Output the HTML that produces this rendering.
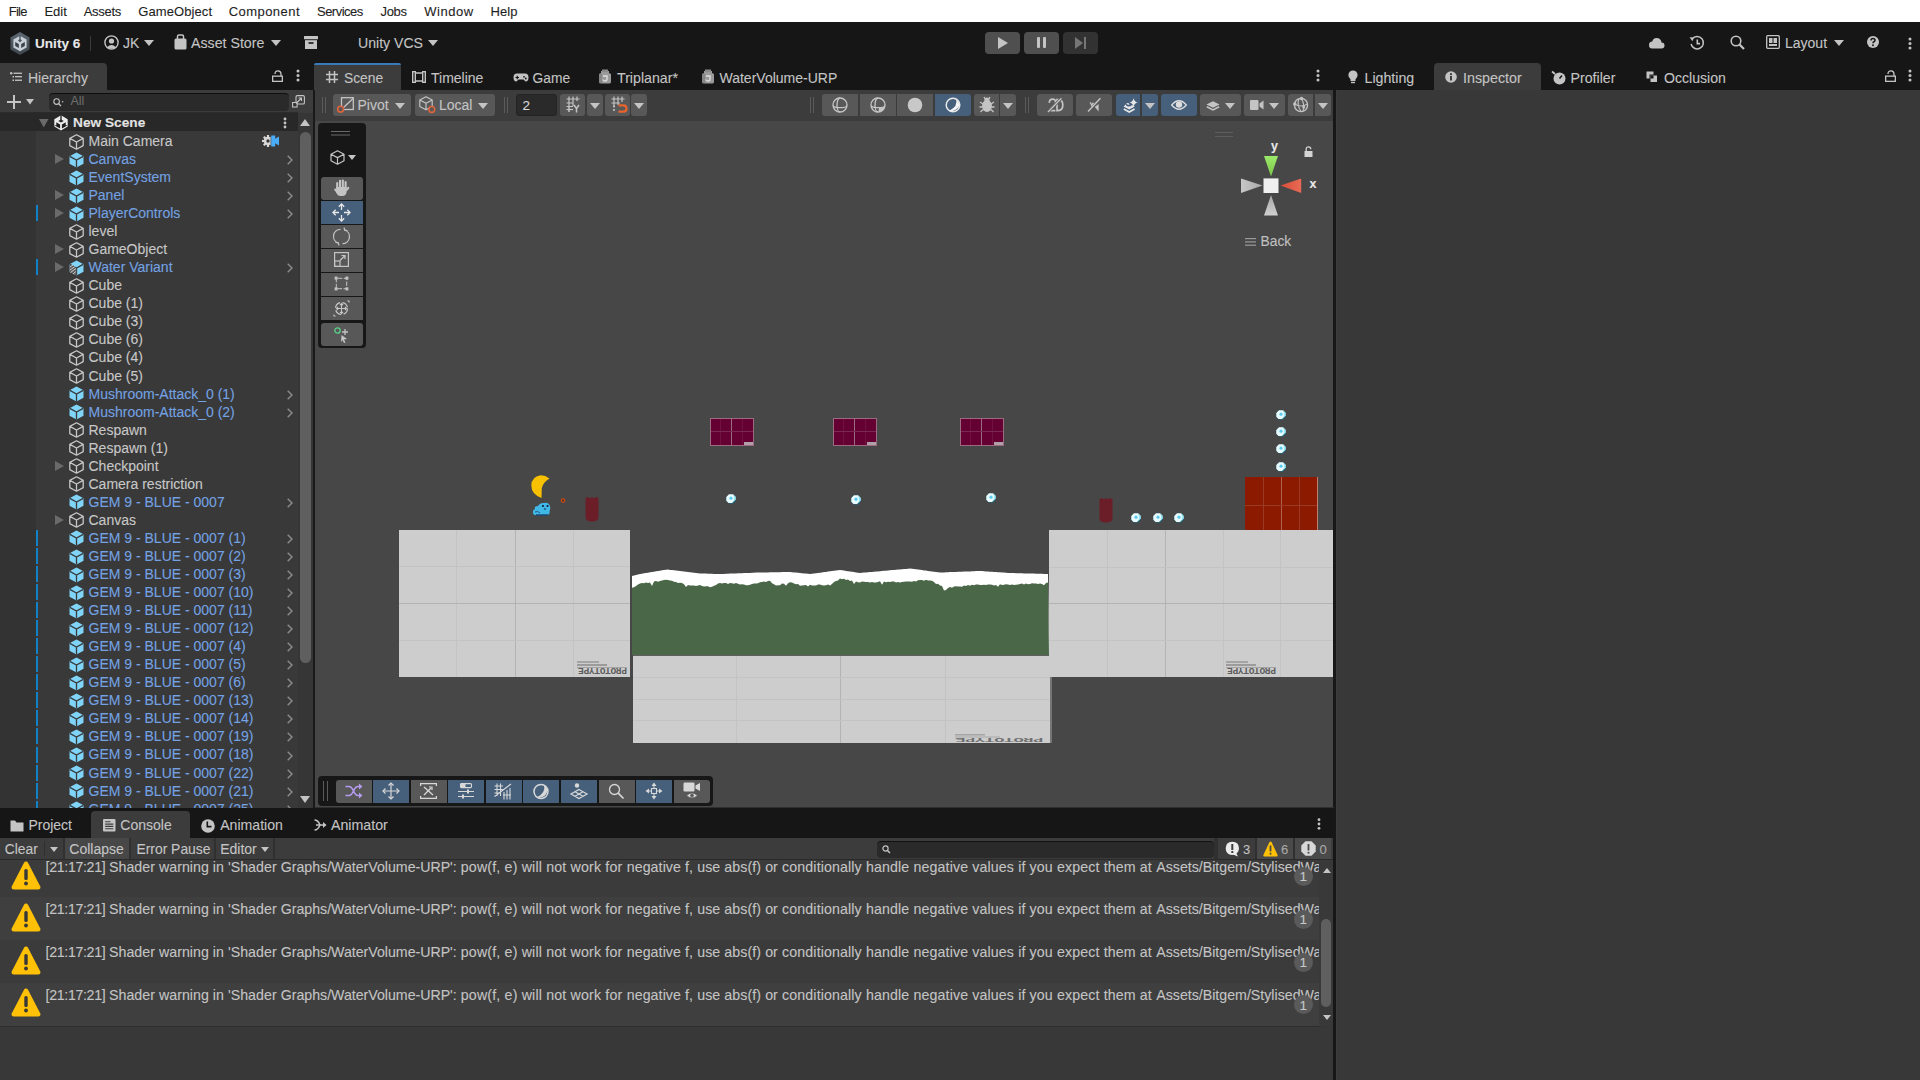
<!DOCTYPE html>
<html><head><meta charset="utf-8">
<style>
*{margin:0;padding:0;box-sizing:border-box}
html,body{width:1920px;height:1080px;overflow:hidden;background:#383838;font-family:"Liberation Sans",sans-serif;font-size:14px;color:#d2d2d2}
.a{position:absolute}
.t{position:absolute;white-space:nowrap;line-height:1;-webkit-text-stroke:0.1px currentColor}
svg{position:absolute;overflow:visible}
</style></head><body>
<div class="a" style="left:0px;top:0px;width:1920px;height:22px;background:#ffffff;"></div>
<span class="t" style="left:8.75px;top:5.30px;font-size:13px;color:#1e1e1e;letter-spacing:-0.731px">File</span>
<span class="t" style="left:44.5px;top:5.30px;font-size:13px;color:#1e1e1e;letter-spacing:-0.050px">Edit</span>
<span class="t" style="left:83.75px;top:5.30px;font-size:13px;color:#1e1e1e;letter-spacing:-0.303px">Assets</span>
<span class="t" style="left:138.25px;top:5.30px;font-size:13px;color:#1e1e1e;letter-spacing:0.087px">GameObject</span>
<span class="t" style="left:228.75px;top:5.30px;font-size:13px;color:#1e1e1e;letter-spacing:0.443px">Component</span>
<span class="t" style="left:317.0px;top:5.30px;font-size:13px;color:#1e1e1e;letter-spacing:-0.515px">Services</span>
<span class="t" style="left:380.5px;top:5.30px;font-size:13px;color:#1e1e1e;letter-spacing:-0.319px">Jobs</span>
<span class="t" style="left:424.25px;top:5.30px;font-size:13px;color:#1e1e1e;letter-spacing:0.547px">Window</span>
<span class="t" style="left:490.5px;top:5.30px;font-size:13px;color:#1e1e1e;letter-spacing:0.086px">Help</span>
<div class="a" style="left:0px;top:22px;width:1920px;height:68px;background:#161616;"></div>
<svg style="left:10px;top:32px" width="20" height="24" viewBox="0 0 20 24">
 <defs><linearGradient id="ulg" x1="0" y1="0" x2="0" y2="1"><stop offset="0" stop-color="#5d6873"/><stop offset="1" stop-color="#3e464e"/></linearGradient></defs>
 <path d="M10 0 L19.5 5.5 L19.5 17.5 L10 23 L0.5 17.5 L0.5 5.5 Z" fill="url(#ulg)"/>
 <path d="M10 3.8 L16.6 7.6 L16.6 15.4 L10 19.2 L3.4 15.4 L3.4 7.6 Z" fill="#c9cfd6"/>
 <path d="M9.2 3.8 H10.8 L10.6 7.2 L12 8.6 L10 10.2 L8 8.6 L9.4 7.2Z" fill="#4a545d"/>
 <path d="M5.2 10 L8.8 12 L8.8 16 L5.2 14Z" fill="#3a424a"/>
 <path d="M14.8 10 L11.2 12 L11.2 16 L14.8 14Z" fill="#3a424a"/>
</svg>
<span class="t" style="left:35px;top:37.09px;font-size:13.6px;color:#e8e8e8;font-weight:bold;">Unity 6</span>
<div class="a" style="left:90px;top:36px;width:1px;height:15px;background:#3a3a3a;"></div>
<svg style="left:104px;top:35px" width="15" height="15" viewBox="0 0 15 15"><circle cx="7.5" cy="7.5" r="6.6" fill="none" stroke="#c4c4c4" stroke-width="1.4"/><circle cx="7.5" cy="6" r="2.6" fill="#c4c4c4"/><path d="M3 12.2 Q7.5 7.8 12 12.2 Q7.5 15.5 3 12.2Z" fill="#c4c4c4"/></svg>
<span class="t" style="left:123px;top:36.05px;font-size:14px;color:#c4c4c4;">JK</span>
<svg style="left:144px;top:40px" width="10" height="6" viewBox="0 0 10 6"><path d="M0 0H10L5.0 6Z" fill="#c4c4c4"/></svg>
<svg style="left:174px;top:34px" width="13" height="16" viewBox="0 0 13 16"><path d="M3.5 5 V2.5 Q3.5 1 5 1 H8 Q9.5 1 9.5 2.5 V5" stroke="#c4c4c4" stroke-width="1.5" fill="none"/><rect x="0.5" y="4.5" width="12" height="11" rx="1.5" fill="#c4c4c4"/></svg>
<span class="t" style="left:191px;top:35.88px;font-size:14.2px;color:#c4c4c4;">Asset Store</span>
<svg style="left:271px;top:40px" width="10" height="6" viewBox="0 0 10 6"><path d="M0 0H10L5.0 6Z" fill="#c4c4c4"/></svg>
<svg style="left:304px;top:36px" width="14" height="13" viewBox="0 0 14 13"><rect x="0" y="0" width="14" height="3.2" rx="0.5" fill="#c4c4c4"/><rect x="1" y="4.2" width="12" height="8.8" fill="#c4c4c4"/><rect x="4.5" y="6.2" width="5" height="1.6" fill="#161616"/></svg>
<span class="t" style="left:358px;top:35.96px;font-size:14.1px;color:#c4c4c4;">Unity VCS</span>
<svg style="left:428px;top:40px" width="10" height="6" viewBox="0 0 10 6"><path d="M0 0H10L5.0 6Z" fill="#c4c4c4"/></svg>
<div class="a" style="left:985px;top:32px;width:35px;height:22px;background:#4f4f4f;border-radius:4px"></div>
<svg style="left:998px;top:37px" width="10" height="12" viewBox="0 0 10 12"><path d="M0 0L10 6L0 12Z" fill="#c4c4c4"/></svg>
<div class="a" style="left:1024px;top:32px;width:35px;height:22px;background:#4f4f4f;border-radius:4px"></div>
<div class="a" style="left:1037px;top:37px;width:3px;height:11px;background:#c4c4c4;border-radius:1px"></div>
<div class="a" style="left:1043px;top:37px;width:3px;height:11px;background:#c4c4c4;border-radius:1px"></div>
<div class="a" style="left:1063px;top:32px;width:35px;height:22px;background:#323232;border-radius:4px"></div>
<svg style="left:1075px;top:37px" width="12" height="12" viewBox="0 0 12 12"><path d="M0 0L8 6L0 12Z" fill="#767676"/><rect x="9" y="0" width="2" height="12" fill="#767676"/></svg>
<svg style="left:1648px;top:37px" width="17" height="12" viewBox="0 0 17 12"><path d="M4 11.5 H13.5 Q16.5 11.5 16.5 8.5 Q16.5 5.5 13.5 5.5 Q13 1 8.5 1 Q5 1 4.3 4.5 Q1 4.8 1 8 Q1 11.5 4 11.5Z" fill="#c4c4c4"/></svg>
<svg style="left:1689px;top:35px" width="16" height="16" viewBox="0 0 16 16"><path d="M3.2 4 A6.2 6.2 0 1 1 2.1 9" stroke="#c4c4c4" stroke-width="1.5" fill="none"/><path d="M0.6 2.2 L4.8 2.4 L3.4 6.3Z" fill="#c4c4c4"/><path d="M8.3 4.6 V8.6 H11" stroke="#c4c4c4" stroke-width="1.6" fill="none"/></svg>
<svg style="left:1730px;top:35px" width="15" height="16" viewBox="0 0 15 16"><circle cx="6" cy="6" r="4.8" stroke="#c4c4c4" stroke-width="1.6" fill="none"/><path d="M9.5 9.5 L14 14" stroke="#c4c4c4" stroke-width="2.2"/></svg>
<svg style="left:1766px;top:35px" width="14" height="14" viewBox="0 0 14 14"><rect x="0.7" y="0.7" width="12.6" height="12.6" rx="1" stroke="#c4c4c4" stroke-width="1.3" fill="none"/><rect x="3" y="3" width="3.5" height="5" fill="#c4c4c4"/><rect x="7.5" y="3" width="3.5" height="5" fill="#c4c4c4"/><rect x="3" y="9" width="8" height="2" fill="#c4c4c4"/></svg>
<span class="t" style="left:1785px;top:36.05px;font-size:14px;color:#c4c4c4;">Layout</span>
<svg style="left:1834px;top:40px" width="10" height="6" viewBox="0 0 10 6"><path d="M0 0H10L5.0 6Z" fill="#c4c4c4"/></svg>
<svg style="left:1867px;top:36px" width="12" height="12" viewBox="0 0 12 12"><circle cx="6" cy="6" r="6" fill="#c4c4c4"/><path d="M4 4.6 Q4 2.5 6 2.5 Q8 2.5 8 4.3 Q8 5.5 6.6 6 Q6 6.3 6 7.3" stroke="#161616" stroke-width="1.5" fill="none"/><circle cx="6" cy="9.3" r="0.95" fill="#161616"/></svg>
<svg style="left:1908px;top:37px" width="4" height="13" viewBox="0 0 4 13"><circle cx="2" cy="2" r="1.5" fill="#c4c4c4"/><circle cx="2" cy="6.5" r="1.5" fill="#c4c4c4"/><circle cx="2" cy="11" r="1.5" fill="#c4c4c4"/></svg>
<div class="a" style="left:0px;top:63px;width:107px;height:27px;background:#3c3c3c;border-radius:0 4px 0 0"></div>
<svg style="left:10px;top:72px" width="12" height="10" viewBox="0 0 12 10"><circle cx="1.2" cy="1.2" r="1.2" fill="#c4c4c4"/><rect x="3.5" y="0.6" width="8.5" height="1.3" fill="#c4c4c4"/><rect x="2.5" y="4" width="1.5" height="1.5" fill="#c4c4c4"/><rect x="5" y="4" width="7" height="1.3" fill="#c4c4c4"/><rect x="2.5" y="7.5" width="1.5" height="1.5" fill="#c4c4c4"/><rect x="5" y="7.6" width="7" height="1.3" fill="#c4c4c4"/></svg>
<span class="t" style="left:28px;top:71.35px;font-size:14px;color:#c4c4c4;">Hierarchy</span>
<svg style="left:272px;top:69.5px" width="11" height="12" viewBox="0 0 11 12"><path d="M3 4 Q3 0.8 6 0.8 Q9 0.8 9 4 V6" stroke="#c4c4c4" stroke-width="1.3" fill="none"/><rect x="0.65" y="6.15" width="9.7" height="5.2" stroke="#c4c4c4" stroke-width="1.3" fill="none"/></svg>
<svg style="left:296px;top:69px" width="4" height="13" viewBox="0 0 4 13"><circle cx="2" cy="2" r="1.5" fill="#c4c4c4"/><circle cx="2" cy="6.5" r="1.5" fill="#c4c4c4"/><circle cx="2" cy="11" r="1.5" fill="#c4c4c4"/></svg>
<div class="a" style="left:314px;top:63px;width:87px;height:27px;background:#3c3c3c;border-radius:4px 4px 0 0"></div>
<div class="a" style="left:314px;top:63px;width:87px;height:2px;background:#3a79bb;border-radius:4px 4px 0 0"></div>
<svg style="left:326px;top:71px" width="12" height="12" viewBox="0 0 12 12"><path d="M3.5 0V12M8.5 0V12M0 3.5H12M0 8.5H12" stroke="#c4c4c4" stroke-width="1.5"/></svg>
<span class="t" style="left:344px;top:71.52px;font-size:13.8px;color:#c4c4c4;">Scene</span>
<svg style="left:412px;top:71px" width="14" height="12" viewBox="0 0 14 12"><rect x="0.7" y="0.7" width="2.6" height="10.6" fill="none" stroke="#c4c4c4" stroke-width="1.4"/><rect x="10.7" y="0.7" width="2.6" height="10.6" fill="none" stroke="#c4c4c4" stroke-width="1.4"/><path d="M3 2H11M3 10H11" stroke="#c4c4c4" stroke-width="1.4"/></svg>
<span class="t" style="left:431px;top:71.35px;font-size:14px;color:#c4c4c4;">Timeline</span>
<svg style="left:513px;top:73px" width="16" height="9" viewBox="0 0 16 9"><path d="M4 0.5 H12 Q15.5 0.5 15.5 4.5 Q15.5 8.5 12.5 8.5 L10.5 6.5 H5.5 L3.5 8.5 Q0.5 8.5 0.5 4.5 Q0.5 0.5 4 0.5Z" fill="#c4c4c4"/><path d="M2.5 4.5H6M4.25 2.8V6.2" stroke="#161616" stroke-width="1.2"/><circle cx="11" cy="3.8" r="0.9" fill="#161616"/><circle cx="12.8" cy="5.5" r="0.9" fill="#161616"/></svg>
<span class="t" style="left:532.5px;top:71.52px;font-size:13.8px;color:#c4c4c4;">Game</span>
<svg style="left:598px;top:69px" width="14" height="15" viewBox="0 0 14 15"><path d="M3 2 H11 V4 L13 5 V13 Q13 14.5 11 14.5 H3 Q1 14.5 1 13 V5 L3 4Z" fill="#9a9a9a"/><rect x="4" y="0.5" width="6" height="2.5" fill="#8a8a8a"/><path d="M5 7 H9 V10 Q9 12 7 12 Q5 12 5 10.5" stroke="#e0e0e0" stroke-width="1.3" fill="none"/><rect x="1" y="5" width="3" height="9" fill="#7a7a7a" opacity=".6"/></svg>
<span class="t" style="left:617px;top:71.18px;font-size:14.2px;color:#c4c4c4;">Triplanar*</span>
<svg style="left:701px;top:69px" width="14" height="15" viewBox="0 0 14 15"><path d="M3 2 H11 V4 L13 5 V13 Q13 14.5 11 14.5 H3 Q1 14.5 1 13 V5 L3 4Z" fill="#9a9a9a"/><rect x="4" y="0.5" width="6" height="2.5" fill="#8a8a8a"/><path d="M5 7 H9 V10 Q9 12 7 12 Q5 12 5 10.5" stroke="#e0e0e0" stroke-width="1.3" fill="none"/><rect x="1" y="5" width="3" height="9" fill="#7a7a7a" opacity=".6"/></svg>
<span class="t" style="left:719.5px;top:71.35px;font-size:14px;color:#c4c4c4;">WaterVolume-URP</span>
<svg style="left:1316px;top:69px" width="4" height="13" viewBox="0 0 4 13"><circle cx="2" cy="2" r="1.5" fill="#c4c4c4"/><circle cx="2" cy="6.5" r="1.5" fill="#c4c4c4"/><circle cx="2" cy="11" r="1.5" fill="#c4c4c4"/></svg>
<svg style="left:1348px;top:70px" width="10" height="14" viewBox="0 0 10 14"><circle cx="5" cy="5" r="4.6" fill="#c4c4c4"/><path d="M2.5 8 H7.5 V11 H2.5Z" fill="#c4c4c4"/><path d="M3 12.5H7" stroke="#c4c4c4" stroke-width="1.4"/></svg>
<span class="t" style="left:1364.5px;top:71.18px;font-size:14.2px;color:#c4c4c4;">Lighting</span>
<div class="a" style="left:1434px;top:63px;width:107px;height:27px;background:#3c3c3c;border-radius:4px 4px 0 0"></div>
<svg style="left:1445px;top:71px" width="12" height="12" viewBox="0 0 12 12"><circle cx="6" cy="6" r="5.8" fill="#c4c4c4"/><rect x="5" y="5" width="2" height="4.5" fill="#3c3c3c"/><circle cx="6" cy="3.2" r="1.1" fill="#3c3c3c"/></svg>
<span class="t" style="left:1463px;top:71.10px;font-size:14.3px;color:#c4c4c4;">Inspector</span>
<svg style="left:1551px;top:70px" width="15" height="15" viewBox="0 0 15 15"><circle cx="8.5" cy="8.5" r="6" fill="#c4c4c4"/><path d="M8.5 8.5 L11 5.5" stroke="#161616" stroke-width="1.5"/><path d="M1 1.5 L4 4" stroke="#c4c4c4" stroke-width="1.8"/></svg>
<span class="t" style="left:1570.5px;top:71.18px;font-size:14.2px;color:#c4c4c4;">Profiler</span>
<svg style="left:1646px;top:71px" width="12" height="12" viewBox="0 0 12 12"><rect x="0.5" y="0.5" width="7" height="7" fill="#c4c4c4"/><rect x="4" y="4" width="7.5" height="7.5" fill="#c4c4c4" stroke="#161616" stroke-width="1"/><rect x="4.5" y="4.5" width="3" height="3" fill="#161616"/></svg>
<span class="t" style="left:1664px;top:71.26px;font-size:14.1px;color:#c4c4c4;">Occlusion</span>
<svg style="left:1885px;top:70px" width="11" height="12" viewBox="0 0 11 12"><path d="M3 4 Q3 0.8 6 0.8 Q9 0.8 9 4 V6" stroke="#c4c4c4" stroke-width="1.3" fill="none"/><rect x="0.65" y="6.15" width="9.7" height="5.2" stroke="#c4c4c4" stroke-width="1.3" fill="none"/></svg>
<svg style="left:1908px;top:69px" width="4" height="13" viewBox="0 0 4 13"><circle cx="2" cy="2" r="1.5" fill="#c4c4c4"/><circle cx="2" cy="6.5" r="1.5" fill="#c4c4c4"/><circle cx="2" cy="11" r="1.5" fill="#c4c4c4"/></svg>
<div class="a" style="left:0px;top:90px;width:313px;height:23px;background:#3c3c3c;"></div>
<div class="a" style="left:0px;top:113px;width:298px;height:695px;background:#393939;"></div>
<div class="a" style="left:0px;top:131px;width:36px;height:677px;background:#333333;"></div>
<div class="a" style="left:298px;top:113px;width:15px;height:695px;background:#363636;"></div>
<svg style="left:7px;top:95px" width="14" height="14" viewBox="0 0 14 14"><path d="M7 0V14M0 7H14" stroke="#c4c4c4" stroke-width="2"/></svg>
<svg style="left:26px;top:98.5px" width="8" height="5.5" viewBox="0 0 8 5.5"><path d="M0 0H8L4.0 5.5Z" fill="#c4c4c4"/></svg>
<div class="a" style="left:49px;top:92.5px;width:240px;height:18px;background:#2a2a2a;border-radius:4px;border-top:1px solid #0e0e0e"></div>
<svg style="left:53px;top:98px" width="11" height="9" viewBox="0 0 11 9"><circle cx="3.6" cy="3.6" r="2.8" stroke="#c4c4c4" stroke-width="1.1" fill="none"/><path d="M5.6 5.6 L8 8" stroke="#c4c4c4" stroke-width="1.3"/><circle cx="9.6" cy="3.7" r="0.8" fill="#c4c4c4"/></svg>
<span class="t" style="left:70.5px;top:95.42px;font-size:12.5px;color:#6c6c6c;">All</span>
<div class="a" style="left:289px;top:92.5px;width:19px;height:18px;background:#3c3c3c;border-radius:0 4px 4px 0"></div>
<svg style="left:292px;top:95px" width="13" height="13" viewBox="0 0 13 13"><rect x="4" y="0.6" width="8.4" height="8.4" rx="1.3" stroke="#c4c4c4" stroke-width="1.1" fill="none"/><rect x="0.6" y="7.5" width="4.5" height="4.5" stroke="#c4c4c4" stroke-width="1.1" fill="#333"/><path d="M4 8.5 L9.5 3 M6.5 3H9.5V6" stroke="#c4c4c4" stroke-width="1.1" fill="none"/></svg>
<div class="a" style="left:0px;top:112px;width:298px;height:1px;background:#2b2b2b;"></div>
<div class="a" style="left:0px;top:113px;width:298px;height:18px;background:#282828;"></div>
<svg style="left:38.5px;top:119.3px" width="9.5" height="8.5" viewBox="0 0 9.5 8.5"><path d="M0 0H9.5L4.75 8.5Z" fill="#6a6a6a"/></svg>
<svg style="left:54px;top:115.3px" width="14" height="15.7" viewBox="0 0 14 15.7"><path d="M7 0.3 L13.7 4.2 L13.7 11.6 L7 15.5 L0.3 11.6 L0.3 4.2Z" fill="#ececec"/><rect x="6.3" y="0" width="1.4" height="5" fill="#282828"/><path d="M7 4.4 L9.8 6 L7 7.6 L4.2 6Z" fill="#282828"/><path d="M2.3 7.3 L6.1 9.4 L6.1 13.4 L0.2 10.3 L2.3 10.3Z" fill="#1e1e1e"/><path d="M11.7 7.3 L7.9 9.4 L7.9 13.4 L13.8 10.3 L11.7 10.3Z" fill="#1e1e1e"/></svg>
<span class="t" style="left:73px;top:116.10px;font-size:13.7px;color:#e2e2e2;font-weight:bold;">New Scene</span>
<svg style="left:283px;top:117px" width="4" height="12" viewBox="0 0 4 12"><circle cx="2" cy="2" r="1.4" fill="#c4c4c4"/><circle cx="2" cy="6" r="1.4" fill="#c4c4c4"/><circle cx="2" cy="10" r="1.4" fill="#c4c4c4"/></svg>
<svg style="left:300px;top:119px" width="10" height="7" viewBox="0 0 10 7"><path d="M0 7H10L5 0Z" fill="#c4c4c4"/></svg>
<div class="a" style="left:300px;top:132px;width:11px;height:531px;background:#5f5f5f;border-radius:5.5px"></div>
<svg style="left:300px;top:796px" width="10" height="7" viewBox="0 0 10 7"><path d="M0 0H10L5 7Z" fill="#c4c4c4"/></svg>
<div class="a" style="left:0;top:131px;width:298px;height:677px;overflow:hidden">
<svg style="left:69px;top:2.5px" width="15" height="16" viewBox="0 0 15 16"><path d="M7.5 0.8 L14.2 4.4 L14.2 11.6 L7.5 15.2 L0.8 11.6 L0.8 4.4Z M0.8 4.4 L7.5 8 L14.2 4.4 M7.5 8 V15.2" stroke="#c8c8c8" stroke-width="1.3" fill="none" stroke-linejoin="round"/></svg>
<span class="t" style="left:88.5px;top:2.95px;font-size:14px;color:#c8c8c8;">Main Camera</span>
<svg style="left:55px;top:23.05px" width="9" height="10" viewBox="0 0 9 10"><path d="M0 0L9 5L0 10Z" fill="#6a6a6a"/></svg>
<svg style="left:69px;top:20.55px" width="15" height="16" viewBox="0 0 15 16"><path d="M7.5 0.5 L14.5 4.2 L14.5 11.8 L7.5 15.5 L0.5 11.8 L0.5 4.2Z" fill="#80d4f8"/><path d="M0.8 4.4 L7.5 8 L14.2 4.4 M7.5 8 V15.5" stroke="#393939" stroke-width="1.3" fill="none"/></svg>
<span class="t" style="left:88.5px;top:21.00px;font-size:14px;color:#74a2e2;">Canvas</span>
<svg style="left:287px;top:24.05px" width="6" height="10" viewBox="0 0 6 10"><path d="M0.7 0.7 L5 5 L0.7 9.3" stroke="#8c8c8c" stroke-width="1.4" fill="none"/></svg>
<svg style="left:69px;top:38.59px" width="15" height="16" viewBox="0 0 15 16"><path d="M7.5 0.5 L14.5 4.2 L14.5 11.8 L7.5 15.5 L0.5 11.8 L0.5 4.2Z" fill="#80d4f8"/><path d="M0.8 4.4 L7.5 8 L14.2 4.4 M7.5 8 V15.5" stroke="#393939" stroke-width="1.3" fill="none"/></svg>
<span class="t" style="left:88.5px;top:39.04px;font-size:14px;color:#74a2e2;">EventSystem</span>
<svg style="left:287px;top:42.09px" width="6" height="10" viewBox="0 0 6 10"><path d="M0.7 0.7 L5 5 L0.7 9.3" stroke="#8c8c8c" stroke-width="1.4" fill="none"/></svg>
<svg style="left:55px;top:59.14px" width="9" height="10" viewBox="0 0 9 10"><path d="M0 0L9 5L0 10Z" fill="#6a6a6a"/></svg>
<svg style="left:69px;top:56.64px" width="15" height="16" viewBox="0 0 15 16"><path d="M7.5 0.5 L14.5 4.2 L14.5 11.8 L7.5 15.5 L0.5 11.8 L0.5 4.2Z" fill="#80d4f8"/><path d="M0.8 4.4 L7.5 8 L14.2 4.4 M7.5 8 V15.5" stroke="#393939" stroke-width="1.3" fill="none"/></svg>
<span class="t" style="left:88.5px;top:57.09px;font-size:14px;color:#74a2e2;">Panel</span>
<svg style="left:287px;top:60.14px" width="6" height="10" viewBox="0 0 6 10"><path d="M0.7 0.7 L5 5 L0.7 9.3" stroke="#8c8c8c" stroke-width="1.4" fill="none"/></svg>
<div class="a" style="left:36px;top:74.18px;width:2px;height:16px;background:#1181c8;"></div>
<svg style="left:55px;top:77.18px" width="9" height="10" viewBox="0 0 9 10"><path d="M0 0L9 5L0 10Z" fill="#6a6a6a"/></svg>
<svg style="left:69px;top:74.68px" width="15" height="16" viewBox="0 0 15 16"><path d="M7.5 0.5 L14.5 4.2 L14.5 11.8 L7.5 15.5 L0.5 11.8 L0.5 4.2Z" fill="#80d4f8"/><path d="M0.8 4.4 L7.5 8 L14.2 4.4 M7.5 8 V15.5" stroke="#393939" stroke-width="1.3" fill="none"/></svg>
<span class="t" style="left:88.5px;top:75.13px;font-size:14px;color:#74a2e2;">PlayerControls</span>
<svg style="left:287px;top:78.18px" width="6" height="10" viewBox="0 0 6 10"><path d="M0.7 0.7 L5 5 L0.7 9.3" stroke="#8c8c8c" stroke-width="1.4" fill="none"/></svg>
<svg style="left:69px;top:92.73px" width="15" height="16" viewBox="0 0 15 16"><path d="M7.5 0.8 L14.2 4.4 L14.2 11.6 L7.5 15.2 L0.8 11.6 L0.8 4.4Z M0.8 4.4 L7.5 8 L14.2 4.4 M7.5 8 V15.2" stroke="#c8c8c8" stroke-width="1.3" fill="none" stroke-linejoin="round"/></svg>
<span class="t" style="left:88.5px;top:93.18px;font-size:14px;color:#c8c8c8;">level</span>
<svg style="left:55px;top:113.27px" width="9" height="10" viewBox="0 0 9 10"><path d="M0 0L9 5L0 10Z" fill="#6a6a6a"/></svg>
<svg style="left:69px;top:110.77px" width="15" height="16" viewBox="0 0 15 16"><path d="M7.5 0.8 L14.2 4.4 L14.2 11.6 L7.5 15.2 L0.8 11.6 L0.8 4.4Z M0.8 4.4 L7.5 8 L14.2 4.4 M7.5 8 V15.2" stroke="#c8c8c8" stroke-width="1.3" fill="none" stroke-linejoin="round"/></svg>
<span class="t" style="left:88.5px;top:111.22px;font-size:14px;color:#c8c8c8;">GameObject</span>
<div class="a" style="left:36px;top:128.32px;width:2px;height:16px;background:#1181c8;"></div>
<svg style="left:55px;top:131.32px" width="9" height="10" viewBox="0 0 9 10"><path d="M0 0L9 5L0 10Z" fill="#6a6a6a"/></svg>
<svg style="left:69px;top:128.82px" width="15" height="16" viewBox="0 0 15 16"><path d="M7.5 0.5 L14.5 4.2 L14.5 11.8 L7.5 15.5 L0.5 11.8 L0.5 4.2Z" fill="#80d4f8"/><path d="M0.8 4.4 L7.5 8 L14.2 4.4 M7.5 8 V15.5" stroke="#393939" stroke-width="1.3" fill="none"/><path d="M0.5 4.2 L7.5 8 V15.5 L0.5 11.8Z" fill="#5a5a5a"/><path d="M1 7 L4 5 M1 10 L6 6.5 M1.5 12.5 L7 8.5 M4 14 L7 11.5" stroke="#d0d0d0" stroke-width="1"/></svg>
<span class="t" style="left:88.5px;top:129.27px;font-size:14px;color:#74a2e2;">Water Variant</span>
<svg style="left:287px;top:132.32px" width="6" height="10" viewBox="0 0 6 10"><path d="M0.7 0.7 L5 5 L0.7 9.3" stroke="#8c8c8c" stroke-width="1.4" fill="none"/></svg>
<svg style="left:69px;top:146.86px" width="15" height="16" viewBox="0 0 15 16"><path d="M7.5 0.8 L14.2 4.4 L14.2 11.6 L7.5 15.2 L0.8 11.6 L0.8 4.4Z M0.8 4.4 L7.5 8 L14.2 4.4 M7.5 8 V15.2" stroke="#c8c8c8" stroke-width="1.3" fill="none" stroke-linejoin="round"/></svg>
<span class="t" style="left:88.5px;top:147.31px;font-size:14px;color:#c8c8c8;">Cube</span>
<svg style="left:69px;top:164.91px" width="15" height="16" viewBox="0 0 15 16"><path d="M7.5 0.8 L14.2 4.4 L14.2 11.6 L7.5 15.2 L0.8 11.6 L0.8 4.4Z M0.8 4.4 L7.5 8 L14.2 4.4 M7.5 8 V15.2" stroke="#c8c8c8" stroke-width="1.3" fill="none" stroke-linejoin="round"/></svg>
<span class="t" style="left:88.5px;top:165.36px;font-size:14px;color:#c8c8c8;">Cube (1)</span>
<svg style="left:69px;top:182.95px" width="15" height="16" viewBox="0 0 15 16"><path d="M7.5 0.8 L14.2 4.4 L14.2 11.6 L7.5 15.2 L0.8 11.6 L0.8 4.4Z M0.8 4.4 L7.5 8 L14.2 4.4 M7.5 8 V15.2" stroke="#c8c8c8" stroke-width="1.3" fill="none" stroke-linejoin="round"/></svg>
<span class="t" style="left:88.5px;top:183.40px;font-size:14px;color:#c8c8c8;">Cube (3)</span>
<svg style="left:69px;top:201.0px" width="15" height="16" viewBox="0 0 15 16"><path d="M7.5 0.8 L14.2 4.4 L14.2 11.6 L7.5 15.2 L0.8 11.6 L0.8 4.4Z M0.8 4.4 L7.5 8 L14.2 4.4 M7.5 8 V15.2" stroke="#c8c8c8" stroke-width="1.3" fill="none" stroke-linejoin="round"/></svg>
<span class="t" style="left:88.5px;top:201.45px;font-size:14px;color:#c8c8c8;">Cube (6)</span>
<svg style="left:69px;top:219.04px" width="15" height="16" viewBox="0 0 15 16"><path d="M7.5 0.8 L14.2 4.4 L14.2 11.6 L7.5 15.2 L0.8 11.6 L0.8 4.4Z M0.8 4.4 L7.5 8 L14.2 4.4 M7.5 8 V15.2" stroke="#c8c8c8" stroke-width="1.3" fill="none" stroke-linejoin="round"/></svg>
<span class="t" style="left:88.5px;top:219.49px;font-size:14px;color:#c8c8c8;">Cube (4)</span>
<svg style="left:69px;top:237.09px" width="15" height="16" viewBox="0 0 15 16"><path d="M7.5 0.8 L14.2 4.4 L14.2 11.6 L7.5 15.2 L0.8 11.6 L0.8 4.4Z M0.8 4.4 L7.5 8 L14.2 4.4 M7.5 8 V15.2" stroke="#c8c8c8" stroke-width="1.3" fill="none" stroke-linejoin="round"/></svg>
<span class="t" style="left:88.5px;top:237.54px;font-size:14px;color:#c8c8c8;">Cube (5)</span>
<svg style="left:69px;top:255.13px" width="15" height="16" viewBox="0 0 15 16"><path d="M7.5 0.5 L14.5 4.2 L14.5 11.8 L7.5 15.5 L0.5 11.8 L0.5 4.2Z" fill="#80d4f8"/><path d="M0.8 4.4 L7.5 8 L14.2 4.4 M7.5 8 V15.5" stroke="#393939" stroke-width="1.3" fill="none"/></svg>
<span class="t" style="left:88.5px;top:255.58px;font-size:14px;color:#74a2e2;">Mushroom-Attack_0 (1)</span>
<svg style="left:287px;top:258.63px" width="6" height="10" viewBox="0 0 6 10"><path d="M0.7 0.7 L5 5 L0.7 9.3" stroke="#8c8c8c" stroke-width="1.4" fill="none"/></svg>
<svg style="left:69px;top:273.18px" width="15" height="16" viewBox="0 0 15 16"><path d="M7.5 0.5 L14.5 4.2 L14.5 11.8 L7.5 15.5 L0.5 11.8 L0.5 4.2Z" fill="#80d4f8"/><path d="M0.8 4.4 L7.5 8 L14.2 4.4 M7.5 8 V15.5" stroke="#393939" stroke-width="1.3" fill="none"/></svg>
<span class="t" style="left:88.5px;top:273.63px;font-size:14px;color:#74a2e2;">Mushroom-Attack_0 (2)</span>
<svg style="left:287px;top:276.68px" width="6" height="10" viewBox="0 0 6 10"><path d="M0.7 0.7 L5 5 L0.7 9.3" stroke="#8c8c8c" stroke-width="1.4" fill="none"/></svg>
<svg style="left:69px;top:291.22px" width="15" height="16" viewBox="0 0 15 16"><path d="M7.5 0.8 L14.2 4.4 L14.2 11.6 L7.5 15.2 L0.8 11.6 L0.8 4.4Z M0.8 4.4 L7.5 8 L14.2 4.4 M7.5 8 V15.2" stroke="#c8c8c8" stroke-width="1.3" fill="none" stroke-linejoin="round"/></svg>
<span class="t" style="left:88.5px;top:291.67px;font-size:14px;color:#c8c8c8;">Respawn</span>
<svg style="left:69px;top:309.27px" width="15" height="16" viewBox="0 0 15 16"><path d="M7.5 0.8 L14.2 4.4 L14.2 11.6 L7.5 15.2 L0.8 11.6 L0.8 4.4Z M0.8 4.4 L7.5 8 L14.2 4.4 M7.5 8 V15.2" stroke="#c8c8c8" stroke-width="1.3" fill="none" stroke-linejoin="round"/></svg>
<span class="t" style="left:88.5px;top:309.72px;font-size:14px;color:#c8c8c8;">Respawn (1)</span>
<svg style="left:55px;top:329.81px" width="9" height="10" viewBox="0 0 9 10"><path d="M0 0L9 5L0 10Z" fill="#6a6a6a"/></svg>
<svg style="left:69px;top:327.31px" width="15" height="16" viewBox="0 0 15 16"><path d="M7.5 0.8 L14.2 4.4 L14.2 11.6 L7.5 15.2 L0.8 11.6 L0.8 4.4Z M0.8 4.4 L7.5 8 L14.2 4.4 M7.5 8 V15.2" stroke="#c8c8c8" stroke-width="1.3" fill="none" stroke-linejoin="round"/></svg>
<span class="t" style="left:88.5px;top:327.76px;font-size:14px;color:#c8c8c8;">Checkpoint</span>
<svg style="left:69px;top:345.36px" width="15" height="16" viewBox="0 0 15 16"><path d="M7.5 0.8 L14.2 4.4 L14.2 11.6 L7.5 15.2 L0.8 11.6 L0.8 4.4Z M0.8 4.4 L7.5 8 L14.2 4.4 M7.5 8 V15.2" stroke="#c8c8c8" stroke-width="1.3" fill="none" stroke-linejoin="round"/></svg>
<span class="t" style="left:88.5px;top:345.81px;font-size:14px;color:#c8c8c8;">Camera restriction</span>
<svg style="left:69px;top:363.4px" width="15" height="16" viewBox="0 0 15 16"><path d="M7.5 0.5 L14.5 4.2 L14.5 11.8 L7.5 15.5 L0.5 11.8 L0.5 4.2Z" fill="#80d4f8"/><path d="M0.8 4.4 L7.5 8 L14.2 4.4 M7.5 8 V15.5" stroke="#393939" stroke-width="1.3" fill="none"/></svg>
<span class="t" style="left:88.5px;top:363.85px;font-size:14px;color:#74a2e2;">GEM 9 - BLUE - 0007</span>
<svg style="left:287px;top:366.9px" width="6" height="10" viewBox="0 0 6 10"><path d="M0.7 0.7 L5 5 L0.7 9.3" stroke="#8c8c8c" stroke-width="1.4" fill="none"/></svg>
<svg style="left:55px;top:383.95px" width="9" height="10" viewBox="0 0 9 10"><path d="M0 0L9 5L0 10Z" fill="#6a6a6a"/></svg>
<svg style="left:69px;top:381.45px" width="15" height="16" viewBox="0 0 15 16"><path d="M7.5 0.8 L14.2 4.4 L14.2 11.6 L7.5 15.2 L0.8 11.6 L0.8 4.4Z M0.8 4.4 L7.5 8 L14.2 4.4 M7.5 8 V15.2" stroke="#c8c8c8" stroke-width="1.3" fill="none" stroke-linejoin="round"/></svg>
<span class="t" style="left:88.5px;top:381.90px;font-size:14px;color:#c8c8c8;">Canvas</span>
<div class="a" style="left:36px;top:398.99px;width:2px;height:16px;background:#1181c8;"></div>
<svg style="left:69px;top:399.49px" width="15" height="16" viewBox="0 0 15 16"><path d="M7.5 0.5 L14.5 4.2 L14.5 11.8 L7.5 15.5 L0.5 11.8 L0.5 4.2Z" fill="#80d4f8"/><path d="M0.8 4.4 L7.5 8 L14.2 4.4 M7.5 8 V15.5" stroke="#393939" stroke-width="1.3" fill="none"/></svg>
<span class="t" style="left:88.5px;top:399.94px;font-size:14px;color:#74a2e2;">GEM 9 - BLUE - 0007 (1)</span>
<svg style="left:287px;top:402.99px" width="6" height="10" viewBox="0 0 6 10"><path d="M0.7 0.7 L5 5 L0.7 9.3" stroke="#8c8c8c" stroke-width="1.4" fill="none"/></svg>
<div class="a" style="left:36px;top:417.04px;width:2px;height:16px;background:#1181c8;"></div>
<svg style="left:69px;top:417.54px" width="15" height="16" viewBox="0 0 15 16"><path d="M7.5 0.5 L14.5 4.2 L14.5 11.8 L7.5 15.5 L0.5 11.8 L0.5 4.2Z" fill="#80d4f8"/><path d="M0.8 4.4 L7.5 8 L14.2 4.4 M7.5 8 V15.5" stroke="#393939" stroke-width="1.3" fill="none"/></svg>
<span class="t" style="left:88.5px;top:417.99px;font-size:14px;color:#74a2e2;">GEM 9 - BLUE - 0007 (2)</span>
<svg style="left:287px;top:421.04px" width="6" height="10" viewBox="0 0 6 10"><path d="M0.7 0.7 L5 5 L0.7 9.3" stroke="#8c8c8c" stroke-width="1.4" fill="none"/></svg>
<div class="a" style="left:36px;top:435.08px;width:2px;height:16px;background:#1181c8;"></div>
<svg style="left:69px;top:435.58px" width="15" height="16" viewBox="0 0 15 16"><path d="M7.5 0.5 L14.5 4.2 L14.5 11.8 L7.5 15.5 L0.5 11.8 L0.5 4.2Z" fill="#80d4f8"/><path d="M0.8 4.4 L7.5 8 L14.2 4.4 M7.5 8 V15.5" stroke="#393939" stroke-width="1.3" fill="none"/></svg>
<span class="t" style="left:88.5px;top:436.03px;font-size:14px;color:#74a2e2;">GEM 9 - BLUE - 0007 (3)</span>
<svg style="left:287px;top:439.08px" width="6" height="10" viewBox="0 0 6 10"><path d="M0.7 0.7 L5 5 L0.7 9.3" stroke="#8c8c8c" stroke-width="1.4" fill="none"/></svg>
<div class="a" style="left:36px;top:453.13px;width:2px;height:16px;background:#1181c8;"></div>
<svg style="left:69px;top:453.63px" width="15" height="16" viewBox="0 0 15 16"><path d="M7.5 0.5 L14.5 4.2 L14.5 11.8 L7.5 15.5 L0.5 11.8 L0.5 4.2Z" fill="#80d4f8"/><path d="M0.8 4.4 L7.5 8 L14.2 4.4 M7.5 8 V15.5" stroke="#393939" stroke-width="1.3" fill="none"/></svg>
<span class="t" style="left:88.5px;top:454.08px;font-size:14px;color:#74a2e2;">GEM 9 - BLUE - 0007 (10)</span>
<svg style="left:287px;top:457.13px" width="6" height="10" viewBox="0 0 6 10"><path d="M0.7 0.7 L5 5 L0.7 9.3" stroke="#8c8c8c" stroke-width="1.4" fill="none"/></svg>
<div class="a" style="left:36px;top:471.17px;width:2px;height:16px;background:#1181c8;"></div>
<svg style="left:69px;top:471.67px" width="15" height="16" viewBox="0 0 15 16"><path d="M7.5 0.5 L14.5 4.2 L14.5 11.8 L7.5 15.5 L0.5 11.8 L0.5 4.2Z" fill="#80d4f8"/><path d="M0.8 4.4 L7.5 8 L14.2 4.4 M7.5 8 V15.5" stroke="#393939" stroke-width="1.3" fill="none"/></svg>
<span class="t" style="left:88.5px;top:472.12px;font-size:14px;color:#74a2e2;">GEM 9 - BLUE - 0007 (11)</span>
<svg style="left:287px;top:475.17px" width="6" height="10" viewBox="0 0 6 10"><path d="M0.7 0.7 L5 5 L0.7 9.3" stroke="#8c8c8c" stroke-width="1.4" fill="none"/></svg>
<div class="a" style="left:36px;top:489.22px;width:2px;height:16px;background:#1181c8;"></div>
<svg style="left:69px;top:489.72px" width="15" height="16" viewBox="0 0 15 16"><path d="M7.5 0.5 L14.5 4.2 L14.5 11.8 L7.5 15.5 L0.5 11.8 L0.5 4.2Z" fill="#80d4f8"/><path d="M0.8 4.4 L7.5 8 L14.2 4.4 M7.5 8 V15.5" stroke="#393939" stroke-width="1.3" fill="none"/></svg>
<span class="t" style="left:88.5px;top:490.17px;font-size:14px;color:#74a2e2;">GEM 9 - BLUE - 0007 (12)</span>
<svg style="left:287px;top:493.22px" width="6" height="10" viewBox="0 0 6 10"><path d="M0.7 0.7 L5 5 L0.7 9.3" stroke="#8c8c8c" stroke-width="1.4" fill="none"/></svg>
<div class="a" style="left:36px;top:507.26px;width:2px;height:16px;background:#1181c8;"></div>
<svg style="left:69px;top:507.76px" width="15" height="16" viewBox="0 0 15 16"><path d="M7.5 0.5 L14.5 4.2 L14.5 11.8 L7.5 15.5 L0.5 11.8 L0.5 4.2Z" fill="#80d4f8"/><path d="M0.8 4.4 L7.5 8 L14.2 4.4 M7.5 8 V15.5" stroke="#393939" stroke-width="1.3" fill="none"/></svg>
<span class="t" style="left:88.5px;top:508.21px;font-size:14px;color:#74a2e2;">GEM 9 - BLUE - 0007 (4)</span>
<svg style="left:287px;top:511.26px" width="6" height="10" viewBox="0 0 6 10"><path d="M0.7 0.7 L5 5 L0.7 9.3" stroke="#8c8c8c" stroke-width="1.4" fill="none"/></svg>
<div class="a" style="left:36px;top:525.31px;width:2px;height:16px;background:#1181c8;"></div>
<svg style="left:69px;top:525.81px" width="15" height="16" viewBox="0 0 15 16"><path d="M7.5 0.5 L14.5 4.2 L14.5 11.8 L7.5 15.5 L0.5 11.8 L0.5 4.2Z" fill="#80d4f8"/><path d="M0.8 4.4 L7.5 8 L14.2 4.4 M7.5 8 V15.5" stroke="#393939" stroke-width="1.3" fill="none"/></svg>
<span class="t" style="left:88.5px;top:526.26px;font-size:14px;color:#74a2e2;">GEM 9 - BLUE - 0007 (5)</span>
<svg style="left:287px;top:529.31px" width="6" height="10" viewBox="0 0 6 10"><path d="M0.7 0.7 L5 5 L0.7 9.3" stroke="#8c8c8c" stroke-width="1.4" fill="none"/></svg>
<div class="a" style="left:36px;top:543.35px;width:2px;height:16px;background:#1181c8;"></div>
<svg style="left:69px;top:543.85px" width="15" height="16" viewBox="0 0 15 16"><path d="M7.5 0.5 L14.5 4.2 L14.5 11.8 L7.5 15.5 L0.5 11.8 L0.5 4.2Z" fill="#80d4f8"/><path d="M0.8 4.4 L7.5 8 L14.2 4.4 M7.5 8 V15.5" stroke="#393939" stroke-width="1.3" fill="none"/></svg>
<span class="t" style="left:88.5px;top:544.30px;font-size:14px;color:#74a2e2;">GEM 9 - BLUE - 0007 (6)</span>
<svg style="left:287px;top:547.35px" width="6" height="10" viewBox="0 0 6 10"><path d="M0.7 0.7 L5 5 L0.7 9.3" stroke="#8c8c8c" stroke-width="1.4" fill="none"/></svg>
<div class="a" style="left:36px;top:561.4px;width:2px;height:16px;background:#1181c8;"></div>
<svg style="left:69px;top:561.9px" width="15" height="16" viewBox="0 0 15 16"><path d="M7.5 0.5 L14.5 4.2 L14.5 11.8 L7.5 15.5 L0.5 11.8 L0.5 4.2Z" fill="#80d4f8"/><path d="M0.8 4.4 L7.5 8 L14.2 4.4 M7.5 8 V15.5" stroke="#393939" stroke-width="1.3" fill="none"/></svg>
<span class="t" style="left:88.5px;top:562.35px;font-size:14px;color:#74a2e2;">GEM 9 - BLUE - 0007 (13)</span>
<svg style="left:287px;top:565.4px" width="6" height="10" viewBox="0 0 6 10"><path d="M0.7 0.7 L5 5 L0.7 9.3" stroke="#8c8c8c" stroke-width="1.4" fill="none"/></svg>
<div class="a" style="left:36px;top:579.44px;width:2px;height:16px;background:#1181c8;"></div>
<svg style="left:69px;top:579.94px" width="15" height="16" viewBox="0 0 15 16"><path d="M7.5 0.5 L14.5 4.2 L14.5 11.8 L7.5 15.5 L0.5 11.8 L0.5 4.2Z" fill="#80d4f8"/><path d="M0.8 4.4 L7.5 8 L14.2 4.4 M7.5 8 V15.5" stroke="#393939" stroke-width="1.3" fill="none"/></svg>
<span class="t" style="left:88.5px;top:580.39px;font-size:14px;color:#74a2e2;">GEM 9 - BLUE - 0007 (14)</span>
<svg style="left:287px;top:583.44px" width="6" height="10" viewBox="0 0 6 10"><path d="M0.7 0.7 L5 5 L0.7 9.3" stroke="#8c8c8c" stroke-width="1.4" fill="none"/></svg>
<div class="a" style="left:36px;top:597.49px;width:2px;height:16px;background:#1181c8;"></div>
<svg style="left:69px;top:597.99px" width="15" height="16" viewBox="0 0 15 16"><path d="M7.5 0.5 L14.5 4.2 L14.5 11.8 L7.5 15.5 L0.5 11.8 L0.5 4.2Z" fill="#80d4f8"/><path d="M0.8 4.4 L7.5 8 L14.2 4.4 M7.5 8 V15.5" stroke="#393939" stroke-width="1.3" fill="none"/></svg>
<span class="t" style="left:88.5px;top:598.44px;font-size:14px;color:#74a2e2;">GEM 9 - BLUE - 0007 (19)</span>
<svg style="left:287px;top:601.49px" width="6" height="10" viewBox="0 0 6 10"><path d="M0.7 0.7 L5 5 L0.7 9.3" stroke="#8c8c8c" stroke-width="1.4" fill="none"/></svg>
<div class="a" style="left:36px;top:615.53px;width:2px;height:16px;background:#1181c8;"></div>
<svg style="left:69px;top:616.03px" width="15" height="16" viewBox="0 0 15 16"><path d="M7.5 0.5 L14.5 4.2 L14.5 11.8 L7.5 15.5 L0.5 11.8 L0.5 4.2Z" fill="#80d4f8"/><path d="M0.8 4.4 L7.5 8 L14.2 4.4 M7.5 8 V15.5" stroke="#393939" stroke-width="1.3" fill="none"/></svg>
<span class="t" style="left:88.5px;top:616.48px;font-size:14px;color:#74a2e2;">GEM 9 - BLUE - 0007 (18)</span>
<svg style="left:287px;top:619.53px" width="6" height="10" viewBox="0 0 6 10"><path d="M0.7 0.7 L5 5 L0.7 9.3" stroke="#8c8c8c" stroke-width="1.4" fill="none"/></svg>
<div class="a" style="left:36px;top:633.58px;width:2px;height:16px;background:#1181c8;"></div>
<svg style="left:69px;top:634.08px" width="15" height="16" viewBox="0 0 15 16"><path d="M7.5 0.5 L14.5 4.2 L14.5 11.8 L7.5 15.5 L0.5 11.8 L0.5 4.2Z" fill="#80d4f8"/><path d="M0.8 4.4 L7.5 8 L14.2 4.4 M7.5 8 V15.5" stroke="#393939" stroke-width="1.3" fill="none"/></svg>
<span class="t" style="left:88.5px;top:634.53px;font-size:14px;color:#74a2e2;">GEM 9 - BLUE - 0007 (22)</span>
<svg style="left:287px;top:637.58px" width="6" height="10" viewBox="0 0 6 10"><path d="M0.7 0.7 L5 5 L0.7 9.3" stroke="#8c8c8c" stroke-width="1.4" fill="none"/></svg>
<div class="a" style="left:36px;top:651.62px;width:2px;height:16px;background:#1181c8;"></div>
<svg style="left:69px;top:652.12px" width="15" height="16" viewBox="0 0 15 16"><path d="M7.5 0.5 L14.5 4.2 L14.5 11.8 L7.5 15.5 L0.5 11.8 L0.5 4.2Z" fill="#80d4f8"/><path d="M0.8 4.4 L7.5 8 L14.2 4.4 M7.5 8 V15.5" stroke="#393939" stroke-width="1.3" fill="none"/></svg>
<span class="t" style="left:88.5px;top:652.57px;font-size:14px;color:#74a2e2;">GEM 9 - BLUE - 0007 (21)</span>
<svg style="left:287px;top:655.62px" width="6" height="10" viewBox="0 0 6 10"><path d="M0.7 0.7 L5 5 L0.7 9.3" stroke="#8c8c8c" stroke-width="1.4" fill="none"/></svg>
<div class="a" style="left:36px;top:669.67px;width:2px;height:16px;background:#1181c8;"></div>
<svg style="left:69px;top:670.17px" width="15" height="16" viewBox="0 0 15 16"><path d="M7.5 0.5 L14.5 4.2 L14.5 11.8 L7.5 15.5 L0.5 11.8 L0.5 4.2Z" fill="#80d4f8"/><path d="M0.8 4.4 L7.5 8 L14.2 4.4 M7.5 8 V15.5" stroke="#393939" stroke-width="1.3" fill="none"/></svg>
<span class="t" style="left:88.5px;top:670.62px;font-size:14px;color:#74a2e2;">GEM 9 - BLUE - 0007 (25)</span>
<svg style="left:287px;top:673.67px" width="6" height="10" viewBox="0 0 6 10"><path d="M0.7 0.7 L5 5 L0.7 9.3" stroke="#8c8c8c" stroke-width="1.4" fill="none"/></svg>
</div>
<svg style="left:262px;top:135px" width="18" height="12" viewBox="0 0 18 12"><circle cx="6" cy="6" r="4.2" fill="#d8d8d8"/><rect x="4.9" y="0" width="2.2" height="3" fill="#d8d8d8" transform="rotate(90 6 6)"/><rect x="4.9" y="0" width="2.2" height="3" fill="#d8d8d8" transform="rotate(135 6 6)"/><rect x="4.9" y="0" width="2.2" height="3" fill="#d8d8d8" transform="rotate(180 6 6)"/><rect x="4.9" y="0" width="2.2" height="3" fill="#d8d8d8" transform="rotate(225 6 6)"/><rect x="4.9" y="0" width="2.2" height="3" fill="#d8d8d8" transform="rotate(270 6 6)"/><rect x="4.9" y="0" width="2.2" height="3" fill="#d8d8d8" transform="rotate(315 6 6)"/><rect x="4.9" y="0" width="2.2" height="3" fill="#d8d8d8" transform="rotate(0 6 6)"/><rect x="4.9" y="0" width="2.2" height="3" fill="#d8d8d8" transform="rotate(45 6 6)"/><circle cx="6" cy="6" r="1.7" fill="#393939"/><rect x="8.6" y="-1" width="10" height="14" fill="#393939"/><rect x="9.2" y="0.5" width="4" height="11" fill="#4aabf7"/><path d="M12.6 4 L17 1.5 V10.5 L12.6 8Z" fill="#4aabf7"/></svg>
<div class="a" style="left:315px;top:90px;width:1019px;height:31px;background:#3c3c3c;"></div>
<div class="a" style="left:322px;top:97px;width:1px;height:16px;background:#5a5a5a;"></div>
<div class="a" style="left:325px;top:97px;width:1px;height:16px;background:#5a5a5a;"></div>
<div class="a" style="left:333px;top:94px;width:78px;height:22px;background:#585858;border-radius:3px"></div>
<svg style="left:337px;top:97px" width="17" height="16" viewBox="0 0 17 16"><rect x="4.5" y="0.7" width="11.8" height="11.8" stroke="#c4c4c4" stroke-width="1.3" fill="none"/><path d="M5 12 L16 1.5" stroke="#c4c4c4" stroke-width="1.3"/><circle cx="3.6" cy="12.2" r="2.9" stroke="#e3643a" stroke-width="1.5" fill="#585858"/></svg>
<span class="t" style="left:357.5px;top:98.15px;font-size:14px;color:#c4c4c4;">Pivot</span>
<svg style="left:395px;top:103px" width="10" height="6" viewBox="0 0 10 6"><path d="M0 0H10L5.0 6Z" fill="#c4c4c4"/></svg>
<div class="a" style="left:414.5px;top:94px;width:80px;height:22px;background:#585858;border-radius:3px"></div>
<svg style="left:419px;top:96px" width="17" height="17" viewBox="0 0 17 17"><path d="M7 0.8 L13.2 4 L13.2 10.5 L7 13.8 L0.8 10.5 L0.8 4Z M0.8 4 L7 7.3 L13.2 4 M7 7.3 V13.8" stroke="#c4c4c4" stroke-width="1.2" fill="none" stroke-linejoin="round"/><circle cx="12.8" cy="13.5" r="2.9" stroke="#e3643a" stroke-width="1.5" fill="#585858"/></svg>
<span class="t" style="left:439px;top:98.15px;font-size:14px;color:#c4c4c4;">Local</span>
<svg style="left:478px;top:103px" width="10" height="6" viewBox="0 0 10 6"><path d="M0 0H10L5.0 6Z" fill="#c4c4c4"/></svg>
<div class="a" style="left:504px;top:97px;width:1px;height:16px;background:#5a5a5a;"></div>
<div class="a" style="left:507px;top:97px;width:1px;height:16px;background:#5a5a5a;"></div>
<div class="a" style="left:516px;top:94px;width:41px;height:22px;background:#2a2a2a;border-radius:3px;border:1px solid #242424"></div>
<span class="t" style="left:522.5px;top:99.27px;font-size:13.5px;color:#d8d8d8;">2</span>
<div class="a" style="left:560px;top:94px;width:25px;height:22px;background:#585858;border-radius:3px"></div>
<svg style="left:566px;top:96px" width="15" height="17" viewBox="0 0 15 17"><path d="M3 0.5V10M7 0.5V10M11 0.5V5M0.5 3H13.5M0.5 7H7.5M0.5 10.5H7" stroke="#c4c4c4" stroke-width="1.2" fill="none"/><path d="M3 10V16M8 9 L10.5 12.5 L13 9 M10.5 12.5V16.5" stroke="#c4c4c4" stroke-width="1.5" fill="none"/><path d="M0.5 13.5H7" stroke="#c4c4c4" stroke-width="1.2"/></svg>
<div class="a" style="left:586.5px;top:94px;width:16px;height:22px;background:#585858;border-radius:3px"></div>
<svg style="left:589.5px;top:103px" width="10" height="6" viewBox="0 0 10 6"><path d="M0 0H10L5.0 6Z" fill="#c4c4c4"/></svg>
<div class="a" style="left:605px;top:94px;width:25px;height:22px;background:#585858;border-radius:3px"></div>
<svg style="left:611px;top:96px" width="17" height="17" viewBox="0 0 17 17"><path d="M3 0.5V10M7 0.5V9M11 0.5V6M0.5 3H13.5M0.5 7H9" stroke="#c4c4c4" stroke-width="1.2" fill="none"/><circle cx="3" cy="10.5" r="1.1" fill="#c4c4c4"/><circle cx="3" cy="14" r="1.1" fill="#c4c4c4"/><path d="M7.5 9.3 H12.5 Q15.5 9.3 15.5 12.5 Q15.5 15.7 12.5 15.7 H7.5" stroke="#e9642c" stroke-width="2.2" fill="none"/></svg>
<div class="a" style="left:631px;top:94px;width:16px;height:22px;background:#585858;border-radius:3px"></div>
<svg style="left:634px;top:103px" width="10" height="6" viewBox="0 0 10 6"><path d="M0 0H10L5.0 6Z" fill="#c4c4c4"/></svg>
<div class="a" style="left:810px;top:97px;width:1px;height:16px;background:#5a5a5a;"></div>
<div class="a" style="left:813px;top:97px;width:1px;height:16px;background:#5a5a5a;"></div>
<div class="a" style="left:822px;top:94px;width:36px;height:22px;background:#585858;border-radius:3px 0 0 3px"></div>
<svg style="left:832px;top:97px" width="16" height="16" viewBox="0 0 16 16"><circle cx="8" cy="8" r="7" stroke="#c4c4c4" stroke-width="1.3" fill="none"/><path d="M8 1 A3 7 0 0 0 8 15 M1.2 8.5 A6.8 2.2 0 0 0 14.8 8.5" stroke="#c4c4c4" stroke-width="1.3" fill="none"/></svg>
<div class="a" style="left:860px;top:94px;width:36px;height:22px;background:#585858;border-radius:0"></div>
<svg style="left:870px;top:97px" width="16" height="16" viewBox="0 0 16 16"><circle cx="8" cy="8" r="7" stroke="#c4c4c4" stroke-width="1.3" fill="none"/><path d="M8 1 A3 7 0 0 0 8 15 M1.2 8.5 A6.8 2.2 0 0 0 14.8 8.5" stroke="#c4c4c4" stroke-width="1.3" fill="none"/><path d="M8.5 15 Q14.5 14 15 8.5 Q14 11 9 11 Q8.5 13 8.5 15Z" fill="#c4c4c4"/></svg>
<div class="a" style="left:897px;top:94px;width:36px;height:22px;background:#585858;border-radius:0"></div>
<svg style="left:907px;top:97px" width="16" height="16" viewBox="0 0 16 16"><circle cx="8" cy="8" r="7.3" fill="#c8c8c8"/></svg>
<div class="a" style="left:935px;top:94px;width:36px;height:22px;background:#46607c;border-radius:0 3px 3px 0"></div>
<svg style="left:945px;top:97px" width="16" height="16" viewBox="0 0 16 16"><circle cx="8" cy="8" r="6.8" stroke="#e8e8e8" stroke-width="1.5" fill="none"/><path d="M4 14 Q11 15 14.5 8.5 Q14 4.5 11 2 Q13.5 9 4 14Z" fill="#f4f4f4"/></svg>
<div class="a" style="left:974px;top:94px;width:25px;height:22px;background:#585858;border-radius:3px 0 0 3px"></div>
<svg style="left:979px;top:96px" width="16" height="17" viewBox="0 0 16 17"><ellipse cx="8" cy="10" rx="5" ry="6" fill="#c4c4c4"/><path d="M1 6 L4 8 M15 6 L12 8 M0.5 11H3.5 M15.5 11H12.5 M1.5 16 L4 13.5 M14.5 16 L12 13.5 M5 1 L6.5 3.5 M11 1 L9.5 3.5" stroke="#c4c4c4" stroke-width="1.3"/><circle cx="8" cy="4" r="2.6" fill="#c4c4c4"/></svg>
<div class="a" style="left:1000px;top:94px;width:16px;height:22px;background:#585858;border-radius:0 3px 3px 0"></div>
<svg style="left:1003px;top:103px" width="10" height="6" viewBox="0 0 10 6"><path d="M0 0H10L5.0 6Z" fill="#c4c4c4"/></svg>
<div class="a" style="left:1025px;top:97px;width:1px;height:16px;background:#5a5a5a;"></div>
<div class="a" style="left:1028px;top:97px;width:1px;height:16px;background:#5a5a5a;"></div>
<div class="a" style="left:1037px;top:94px;width:36px;height:22px;background:#585858;border-radius:3px"></div>
<svg style="left:1047px;top:97px" width="17" height="16" viewBox="0 0 17 16"><path d="M2.2 5.8 Q2.6 2.2 5.6 2.2 Q8.6 2.2 8.6 5.2 Q8.6 7.6 5.2 10.2 L2.2 13.6 H8.4" stroke="#c4c4c4" stroke-width="1.7" fill="none"/><path d="M10 2.6 H11.2 Q15.8 2.6 15.8 8.1 Q15.8 13.6 11.2 13.6 H10Z" stroke="#c4c4c4" stroke-width="1.7" fill="none"/><path d="M1 15 L14.5 1.2" stroke="#585858" stroke-width="3"/><path d="M1 15 L14.5 1.2" stroke="#c4c4c4" stroke-width="1.3"/></svg>
<div class="a" style="left:1076px;top:94px;width:36px;height:22px;background:#585858;border-radius:3px"></div>
<svg style="left:1087px;top:97px" width="15" height="16" viewBox="0 0 15 16"><path d="M7.8 10 L11.6 7 V14.5Z" fill="#c4c4c4"/><path d="M3.2 5.2 L5.4 9.6 M6.6 5.8 L4.4 8.2" stroke="#c4c4c4" stroke-width="1.3"/><path d="M1 14.6 L13.4 1.2" stroke="#c4c4c4" stroke-width="1.4"/></svg>
<div class="a" style="left:1116px;top:94px;width:24px;height:22px;background:#46607c;border-radius:3px 0 0 3px"></div>
<svg style="left:1122.5px;top:97.5px" width="15" height="15" viewBox="0 0 15 15"><path d="M0.8 11 L6.2 14 L11.6 11" stroke="#e8e8e8" stroke-width="1.6" fill="none"/><path d="M0.6 8.6 L6.2 11.6 L11.8 8.6 L9 7.1 Q7.5 9 5 8.5 Q2.5 8 3 6.3Z" fill="#e8e8e8"/><path d="M3.2 5.6 Q5 4.3 6.6 6.2 Q5.5 7.6 3.2 5.6Z" fill="#e8e8e8"/><path d="M10.6 0.2 Q11.2 3.6 14.6 4.5 Q11.2 5.4 10.6 8.8 Q10 5.4 6.6 4.5 Q10 3.6 10.6 0.2Z" fill="#e8e8e8"/></svg>
<div class="a" style="left:1142px;top:94px;width:16px;height:22px;background:#46607c;border-radius:0 3px 3px 0"></div>
<svg style="left:1145px;top:103px" width="10" height="6" viewBox="0 0 10 6"><path d="M0 0H10L5.0 6Z" fill="#c4c4c4"/></svg>
<div class="a" style="left:1161px;top:94px;width:36px;height:22px;background:#46607c;border-radius:3px"></div>
<svg style="left:1171px;top:99px" width="16" height="12" viewBox="0 0 16 12"><path d="M0.7 6 Q8 -2.5 15.3 6 Q8 14.5 0.7 6Z" stroke="#dedede" stroke-width="1.3" fill="none"/><circle cx="8" cy="5.6" r="3.2" fill="#dedede"/></svg>
<div class="a" style="left:1200px;top:94px;width:41px;height:22px;background:#585858;border-radius:3px"></div>
<svg style="left:1205.5px;top:100.5px" width="14" height="10" viewBox="0 0 14 10"><path d="M7 0.3 L13.6 3.5 L7 6.7 L0.4 3.5Z" fill="#c4c4c4"/><path d="M0.8 5.8 L7 8.9 L13.2 5.8" stroke="#c4c4c4" stroke-width="1.7" fill="none"/></svg>
<svg style="left:1224.5px;top:103px" width="10" height="6" viewBox="0 0 10 6"><path d="M0 0H10L5.0 6Z" fill="#c4c4c4"/></svg>
<div class="a" style="left:1244px;top:94px;width:41px;height:22px;background:#585858;border-radius:3px"></div>
<svg style="left:1250px;top:99px" width="14" height="12" viewBox="0 0 14 12"><rect x="0" y="1" width="8.5" height="10" rx="1" fill="#c4c4c4"/><path d="M9.5 4.5 L13.5 1.5 V10.5 L9.5 7.5Z" fill="#c4c4c4"/></svg>
<svg style="left:1269px;top:103px" width="10" height="6" viewBox="0 0 10 6"><path d="M0 0H10L5.0 6Z" fill="#c4c4c4"/></svg>
<div class="a" style="left:1288px;top:94px;width:25px;height:22px;background:#585858;border-radius:3px 0 0 3px"></div>
<svg style="left:1293px;top:96px" width="16" height="17" viewBox="0 0 16 17"><circle cx="8" cy="9" r="6.6" stroke="#c4c4c4" stroke-width="1.3" fill="none"/><path d="M1.5 8 Q8 12 14.5 8 M6 2.5 Q3.5 9 8 15.5 M8.5 2.5 Q12 9 10 15" stroke="#c4c4c4" stroke-width="1.1" fill="none"/><circle cx="8.5" cy="2.5" r="1.7" fill="#c4c4c4"/><circle cx="1.8" cy="8" r="1.7" fill="#c4c4c4"/><circle cx="10.7" cy="11" r="1.5" fill="#c4c4c4"/></svg>
<div class="a" style="left:1315px;top:94px;width:16px;height:22px;background:#585858;border-radius:0 3px 3px 0"></div>
<svg style="left:1318px;top:103px" width="10" height="6" viewBox="0 0 10 6"><path d="M0 0H10L5.0 6Z" fill="#c4c4c4"/></svg>
<div class="a" style="left:315px;top:121px;width:1019px;height:687px;background:#474747;"></div>
<div class="a" style="left:315px;top:121px;width:1019px;height:687px;overflow:hidden">
<div class="a" style="left:84px;top:409px;width:231px;height:147px;background:#cdcdcd;"></div>
<div class="a" style="left:141px;top:409px;width:1px;height:147px;background:#c3c3c3;"></div>
<div class="a" style="left:200px;top:409px;width:1px;height:147px;background:#b3b3b3;"></div>
<div class="a" style="left:258px;top:409px;width:1px;height:147px;background:#c3c3c3;"></div>
<div class="a" style="left:84px;top:445px;width:231px;height:1px;background:#c3c3c3;"></div>
<div class="a" style="left:84px;top:482px;width:231px;height:1px;background:#b3b3b3;"></div>
<div class="a" style="left:84px;top:519px;width:231px;height:1px;background:#c3c3c3;"></div>
<div class="a" style="left:318px;top:534px;width:418px;height:88px;background:#cdcdcd;"></div>
<div class="a" style="left:421px;top:534px;width:1px;height:88px;background:#c3c3c3;"></div>
<div class="a" style="left:525px;top:534px;width:1px;height:88px;background:#b3b3b3;"></div>
<div class="a" style="left:630px;top:534px;width:1px;height:88px;background:#c3c3c3;"></div>
<div class="a" style="left:318px;top:556px;width:418px;height:1px;background:#c3c3c3;"></div>
<div class="a" style="left:318px;top:578px;width:418px;height:1px;background:#c3c3c3;"></div>
<div class="a" style="left:318px;top:599px;width:418px;height:1px;background:#c3c3c3;"></div>
<div class="a" style="left:735px;top:534px;width:2px;height:88px;background:#767676;"></div>
<div class="a" style="left:318px;top:534px;width:418px;height:1px;background:#606060;"></div>
<div class="a" style="left:734px;top:409px;width:285px;height:147px;background:#cdcdcd;"></div>
<div class="a" style="left:792px;top:409px;width:1px;height:147px;background:#c3c3c3;"></div>
<div class="a" style="left:850px;top:409px;width:1px;height:147px;background:#b3b3b3;"></div>
<div class="a" style="left:908px;top:409px;width:1px;height:147px;background:#c3c3c3;"></div>
<div class="a" style="left:965px;top:409px;width:1px;height:147px;background:#c3c3c3;"></div>
<div class="a" style="left:734px;top:446px;width:285px;height:1px;background:#c3c3c3;"></div>
<div class="a" style="left:734px;top:482px;width:285px;height:1px;background:#b3b3b3;"></div>
<div class="a" style="left:734px;top:519px;width:285px;height:1px;background:#c3c3c3;"></div>
<svg style="left:261px;top:545.5px" width="52" height="10" viewBox="0 0 52 10"><g transform="rotate(180 26 5)"><text x="1" y="9" font-family="Liberation Mono" font-weight="bold" font-size="9.5" fill="#5e5e5e" letter-spacing="-0.3">PROTOTYPE</text></g><rect x="1" y="0" width="50" height="0.8" fill="#9a9a9a"/><rect x="1" y="-6" width="22" height="2" fill="#8a8a8a" opacity=".6"/><rect x="1" y="-3" width="30" height="2" fill="#7a7a7a" opacity=".6"/></svg>
<svg style="left:910px;top:545.5px" width="52" height="10" viewBox="0 0 52 10"><g transform="rotate(180 26 5)"><text x="1" y="9" font-family="Liberation Mono" font-weight="bold" font-size="9.5" fill="#5e5e5e" letter-spacing="-0.3">PROTOTYPE</text></g><rect x="1" y="0" width="50" height="0.8" fill="#9a9a9a"/><rect x="1" y="-6" width="22" height="2" fill="#8a8a8a" opacity=".6"/><rect x="1" y="-3" width="30" height="2" fill="#7a7a7a" opacity=".6"/></svg>
<svg style="left:638px;top:612.5px" width="92" height="9" viewBox="0 0 92 9"><rect x="2" y="0" width="30" height="1.5" fill="#8a8a8a" opacity=".6"/><rect x="2" y="2.5" width="45" height="1" fill="#8a8a8a" opacity=".5"/><g transform="translate(92 9) rotate(180) scale(1.8 0.55)"><text x="1" y="9" font-family="Liberation Mono" font-weight="bold" font-size="9.5" fill="#707070" letter-spacing="-0.3">PROTOTYPE</text></g></svg>
<svg style="left:0px;top:0px" width="1019" height="687" viewBox="315 121 1019 687"><path d="M632 576.0 L634 575.5 L636 575.0 L638 574.5 L640 574.0 L642 573.7 L644 573.3 L646 573.0 L648 572.7 L650 572.3 L652 572.0 L654 571.7 L656 571.3 L658 571.0 L660 570.7 L662 570.3 L664 570.0 L666 569.7 L668 569.6 L670 569.9 L672 570.1 L674 570.3 L676 570.6 L678 570.8 L680 571.1 L682 571.3 L684 571.6 L686 571.8 L688 572.0 L690 572.3 L692 572.5 L694 572.8 L696 573.0 L698 573.3 L700 573.5 L702 573.5 L704 573.6 L706 573.6 L708 573.7 L710 573.8 L712 573.8 L714 573.9 L716 573.9 L718 574.0 L720 574.0 L722 573.9 L724 573.9 L726 573.8 L728 573.7 L730 573.6 L732 573.5 L734 573.5 L736 573.4 L738 573.3 L740 573.2 L742 573.2 L744 573.1 L746 573.0 L748 573.0 L750 572.9 L752 572.8 L754 572.7 L756 572.6 L758 572.6 L760 572.5 L762 572.5 L764 572.4 L766 572.4 L768 572.4 L770 572.3 L772 572.3 L774 572.3 L776 572.2 L778 572.2 L780 572.2 L782 572.1 L784 572.1 L786 572.1 L788 572.0 L790 572.0 L792 572.2 L794 572.4 L796 572.6 L798 572.8 L800 573.0 L802 573.2 L804 573.4 L806 573.6 L808 573.8 L810 574.0 L812 573.7 L814 573.5 L816 573.2 L818 572.9 L820 572.7 L822 572.4 L824 572.1 L826 571.9 L828 571.6 L830 571.3 L832 571.1 L834 570.8 L836 570.5 L838 570.3 L840 570.0 L842 570.3 L844 570.6 L846 570.9 L848 571.2 L850 571.5 L852 571.8 L854 572.1 L856 572.4 L858 572.7 L860 573.0 L862 572.8 L864 572.6 L866 572.5 L868 572.3 L870 572.1 L872 571.9 L874 571.7 L876 571.6 L878 571.4 L880 571.2 L882 571.0 L884 570.8 L886 570.7 L888 570.5 L890 570.3 L892 570.1 L894 569.9 L896 569.8 L898 569.6 L900 569.4 L902 569.2 L904 569.0 L906 568.9 L908 568.7 L910 568.5 L912 568.8 L914 569.0 L916 569.3 L918 569.6 L920 569.8 L922 570.1 L924 570.4 L926 570.6 L928 570.9 L930 571.2 L932 571.4 L934 571.7 L936 572.0 L938 572.2 L940 572.5 L942 572.4 L944 572.4 L946 572.3 L948 572.2 L950 572.1 L952 572.0 L954 572.0 L956 571.9 L958 571.8 L960 571.8 L962 571.7 L964 571.6 L966 571.5 L968 571.5 L970 571.4 L972 571.3 L974 571.2 L976 571.1 L978 571.1 L980 571.0 L982 571.1 L984 571.3 L986 571.4 L988 571.5 L990 571.7 L992 571.8 L994 571.9 L996 572.1 L998 572.2 L1000 572.3 L1002 572.5 L1004 572.6 L1006 572.7 L1008 572.9 L1010 573.0 L1012 573.1 L1014 573.1 L1016 573.2 L1018 573.2 L1020 573.3 L1022 573.3 L1024 573.4 L1026 573.4 L1028 573.5 L1030 573.5 L1032 573.6 L1034 573.6 L1036 573.7 L1038 573.7 L1040 573.8 L1042 573.8 L1044 573.9 L1046 573.9 L1048 574.0 L1049 655 L632 655Z" fill="#ffffff"/><path d="M632 588 L632.0 587.8 L634.0 587.2 L636.0 586.1 L638.0 584.4 L640.0 583.4 L642.0 583.1 L644.0 583.3 L646.0 582.6 L648.0 583.0 L650.0 582.6 L652.0 586.1 L654.0 581.6 L656.0 581.1 L658.0 581.7 L660.0 581.1 L662.0 580.6 L664.0 579.9 L666.0 579.8 L668.0 579.9 L670.0 580.6 L672.0 580.7 L674.0 581.8 L676.0 582.1 L678.0 583.0 L680.0 582.7 L682.0 582.9 L684.0 584.2 L686.0 587.0 L688.0 585.0 L690.0 585.5 L692.0 585.4 L694.0 585.4 L696.0 585.9 L698.0 585.5 L700.0 585.1 L702.0 586.0 L704.0 586.4 L706.0 586.2 L708.0 586.3 L710.0 587.2 L712.0 586.8 L714.0 585.8 L716.0 585.1 L718.0 583.5 L720.0 583.1 L722.0 583.5 L724.0 582.9 L726.0 583.1 L728.0 584.0 L730.0 583.0 L732.0 583.2 L734.0 583.8 L736.0 583.1 L738.0 583.7 L740.0 584.6 L742.0 584.2 L744.0 584.6 L746.0 585.2 L748.0 585.3 L750.0 584.8 L752.0 584.0 L754.0 583.6 L756.0 583.4 L758.0 583.2 L760.0 582.3 L762.0 582.0 L764.0 581.5 L766.0 582.0 L768.0 581.1 L770.0 580.8 L772.0 583.2 L774.0 584.3 L776.0 585.4 L778.0 585.2 L780.0 585.3 L782.0 583.6 L784.0 583.8 L786.0 585.8 L788.0 583.2 L790.0 582.3 L792.0 582.4 L794.0 583.6 L796.0 584.2 L798.0 584.0 L800.0 585.7 L802.0 585.4 L804.0 585.3 L806.0 585.0 L808.0 586.4 L810.0 584.7 L812.0 585.6 L814.0 585.6 L816.0 585.6 L818.0 584.6 L820.0 584.6 L822.0 585.2 L824.0 585.5 L826.0 585.2 L828.0 584.4 L830.0 585.6 L832.0 584.1 L834.0 581.9 L836.0 580.9 L838.0 580.5 L840.0 578.4 L842.0 579.2 L844.0 578.7 L846.0 580.1 L848.0 579.4 L850.0 580.9 L852.0 580.4 L854.0 583.9 L856.0 581.5 L858.0 582.3 L860.0 582.5 L862.0 581.6 L864.0 581.7 L866.0 582.1 L868.0 581.9 L870.0 582.6 L872.0 581.9 L874.0 582.6 L876.0 582.6 L878.0 582.0 L880.0 581.3 L882.0 584.7 L884.0 581.5 L886.0 582.3 L888.0 581.8 L890.0 582.1 L892.0 581.4 L894.0 581.6 L896.0 582.4 L898.0 582.1 L900.0 582.6 L902.0 582.0 L904.0 581.8 L906.0 581.5 L908.0 581.4 L910.0 581.6 L912.0 581.8 L914.0 581.1 L916.0 581.4 L918.0 580.3 L920.0 580.1 L922.0 579.9 L924.0 580.8 L926.0 579.8 L928.0 580.4 L930.0 580.5 L932.0 580.7 L934.0 582.0 L936.0 583.9 L938.0 583.8 L940.0 585.4 L942.0 586.0 L944.0 590.4 L946.0 590.0 L948.0 587.9 L950.0 586.9 L952.0 587.7 L954.0 586.5 L956.0 586.3 L958.0 586.4 L960.0 586.4 L962.0 586.7 L964.0 585.6 L966.0 586.0 L968.0 585.1 L970.0 585.8 L972.0 584.7 L974.0 585.3 L976.0 584.4 L978.0 584.4 L980.0 584.9 L982.0 585.1 L984.0 584.7 L986.0 585.0 L988.0 584.5 L990.0 584.4 L992.0 584.7 L994.0 585.4 L996.0 585.0 L998.0 586.8 L1000.0 584.3 L1002.0 585.0 L1004.0 584.8 L1006.0 584.2 L1008.0 584.6 L1010.0 585.1 L1012.0 584.5 L1014.0 585.1 L1016.0 584.8 L1018.0 584.5 L1020.0 584.0 L1022.0 583.6 L1024.0 584.4 L1026.0 583.5 L1028.0 584.3 L1030.0 584.0 L1032.0 583.3 L1034.0 583.6 L1036.0 583.5 L1038.0 584.1 L1040.0 583.4 L1042.0 583.9 L1044.0 585.3 L1046.0 583.1 L1048.0 582.6 L1049 655 L632 655Z" fill="#4a6748"/></svg>
<div class="a" style="left:930px;top:356px;width:73px;height:53px;background:#8b1a00;"></div>
<div class="a" style="left:948px;top:356px;width:1px;height:53px;background:#9a3a24;"></div>
<div class="a" style="left:984px;top:356px;width:1px;height:53px;background:#9a3a24;"></div>
<div class="a" style="left:966px;top:356px;width:1px;height:53px;background:#b06050;"></div>
<div class="a" style="left:930px;top:384px;width:73px;height:1px;background:#9a3a24;"></div>
<div class="a" style="left:1002px;top:356px;width:1px;height:53px;background:#c08070;"></div>
<div class="a" style="left:395px;top:297px;width:44px;height:28px;background:#640032;box-shadow:inset 0 0 0 1px #9a6a80"></div>
<div class="a" style="left:405px;top:298px;width:1px;height:26px;background:#70123f;"></div>
<div class="a" style="left:427px;top:298px;width:1px;height:26px;background:#70123f;"></div>
<div class="a" style="left:416px;top:298px;width:1px;height:26px;background:#9a6a80;"></div>
<div class="a" style="left:396px;top:310px;width:42px;height:1px;background:#7a2a52;"></div>
<div class="a" style="left:429px;top:321px;width:9px;height:3px;background:#b0a0a8;"></div>
<div class="a" style="left:518px;top:297px;width:44px;height:28px;background:#640032;box-shadow:inset 0 0 0 1px #9a6a80"></div>
<div class="a" style="left:528px;top:298px;width:1px;height:26px;background:#70123f;"></div>
<div class="a" style="left:550px;top:298px;width:1px;height:26px;background:#70123f;"></div>
<div class="a" style="left:539px;top:298px;width:1px;height:26px;background:#9a6a80;"></div>
<div class="a" style="left:519px;top:310px;width:42px;height:1px;background:#7a2a52;"></div>
<div class="a" style="left:552px;top:321px;width:9px;height:3px;background:#b0a0a8;"></div>
<div class="a" style="left:645px;top:297px;width:44px;height:28px;background:#640032;box-shadow:inset 0 0 0 1px #9a6a80"></div>
<div class="a" style="left:655px;top:298px;width:1px;height:26px;background:#70123f;"></div>
<div class="a" style="left:677px;top:298px;width:1px;height:26px;background:#70123f;"></div>
<div class="a" style="left:666px;top:298px;width:1px;height:26px;background:#9a6a80;"></div>
<div class="a" style="left:646px;top:310px;width:42px;height:1px;background:#7a2a52;"></div>
<div class="a" style="left:679px;top:321px;width:9px;height:3px;background:#b0a0a8;"></div>
<svg style="left:216px;top:354px" width="19" height="23" viewBox="0 0 19 23"><path d="M18.5 3.5 Q14 0 9.5 0.2 Q0.5 1.5 0.3 10.5 Q0.5 19.5 10.5 23 L10.8 13 Q12 7.5 18.5 3.5Z" fill="#f7c000"/></svg>
<svg style="left:217px;top:381px" width="19" height="14" viewBox="0 0 19 14"><path d="M3 7 Q2 4 6 4 Q8 0.5 12 1 Q16 0 17.5 3 Q19 6 17.5 9 Q18.5 12.5 15 13 H4 Q0.5 13 1 10 Q0.5 8 3 7Z" fill="#3fb8e8"/><circle cx="11" cy="4" r="1" fill="#112"/><circle cx="15.5" cy="4" r="1" fill="#112"/><path d="M12 7 H14" stroke="#124" stroke-width="1"/><path d="M4 13 H16" stroke="#1a4a78" stroke-width="1.5"/><path d="M3 10 Q6 8.5 8 11" stroke="#246" stroke-width="0.8" fill="none"/></svg>
<svg style="left:245px;top:377px" width="6" height="5" viewBox="0 0 6 5"><circle cx="3" cy="2.5" r="2.2" fill="#d44a10"/><circle cx="3" cy="2.5" r="0.9" fill="#222"/></svg>
<svg style="left:270px;top:376px" width="14" height="25" viewBox="0 0 14 25"><path d="M0.5 1 L3 0 L5 1.5 L7 0 L9 1.5 L11 0 L13.5 1 V20 Q13.5 24.5 7 24.5 Q0.5 24.5 0.5 20Z" fill="#6c1e28"/></svg>
<svg style="left:784px;top:377px" width="14" height="25" viewBox="0 0 14 25"><path d="M0.5 1 L3 0 L5 1.5 L7 0 L9 1.5 L11 0 L13.5 1 V20 Q13.5 24.5 7 24.5 Q0.5 24.5 0.5 20Z" fill="#6c1e28"/></svg>
<svg style="left:410.5px;top:373px" width="10" height="10" viewBox="0 0 10 10"><path d="M3 0.5 H7 L9.7 3.2 V6.8 L7 9.5 H3 L0.3 6.8 V3.2Z" fill="#1f6f86"/><path d="M3 0.3 H7 L9.5 2.8 V5.5 L6 9 H2.5 L0.3 6.8 V3Z" fill="#eafcff"/><path d="M7 0.3 L9.5 2.8 V5.5 L7.5 7.5 Q9 4 7 0.3Z" fill="#8ee8f8"/><circle cx="5" cy="4.2" r="1.6" fill="#5ccaf0"/></svg>
<svg style="left:536px;top:374px" width="10" height="10" viewBox="0 0 10 10"><path d="M3 0.5 H7 L9.7 3.2 V6.8 L7 9.5 H3 L0.3 6.8 V3.2Z" fill="#1f6f86"/><path d="M3 0.3 H7 L9.5 2.8 V5.5 L6 9 H2.5 L0.3 6.8 V3Z" fill="#eafcff"/><path d="M7 0.3 L9.5 2.8 V5.5 L7.5 7.5 Q9 4 7 0.3Z" fill="#8ee8f8"/><circle cx="5" cy="4.2" r="1.6" fill="#5ccaf0"/></svg>
<svg style="left:671px;top:372px" width="10" height="10" viewBox="0 0 10 10"><path d="M3 0.5 H7 L9.7 3.2 V6.8 L7 9.5 H3 L0.3 6.8 V3.2Z" fill="#1f6f86"/><path d="M3 0.3 H7 L9.5 2.8 V5.5 L6 9 H2.5 L0.3 6.8 V3Z" fill="#eafcff"/><path d="M7 0.3 L9.5 2.8 V5.5 L7.5 7.5 Q9 4 7 0.3Z" fill="#8ee8f8"/><circle cx="5" cy="4.2" r="1.6" fill="#5ccaf0"/></svg>
<svg style="left:815.5px;top:391.5px" width="10" height="10" viewBox="0 0 10 10"><path d="M3 0.5 H7 L9.7 3.2 V6.8 L7 9.5 H3 L0.3 6.8 V3.2Z" fill="#1f6f86"/><path d="M3 0.3 H7 L9.5 2.8 V5.5 L6 9 H2.5 L0.3 6.8 V3Z" fill="#eafcff"/><path d="M7 0.3 L9.5 2.8 V5.5 L7.5 7.5 Q9 4 7 0.3Z" fill="#8ee8f8"/><circle cx="5" cy="4.2" r="1.6" fill="#5ccaf0"/></svg>
<svg style="left:838px;top:391.5px" width="10" height="10" viewBox="0 0 10 10"><path d="M3 0.5 H7 L9.7 3.2 V6.8 L7 9.5 H3 L0.3 6.8 V3.2Z" fill="#1f6f86"/><path d="M3 0.3 H7 L9.5 2.8 V5.5 L6 9 H2.5 L0.3 6.8 V3Z" fill="#eafcff"/><path d="M7 0.3 L9.5 2.8 V5.5 L7.5 7.5 Q9 4 7 0.3Z" fill="#8ee8f8"/><circle cx="5" cy="4.2" r="1.6" fill="#5ccaf0"/></svg>
<svg style="left:858.5px;top:391.5px" width="10" height="10" viewBox="0 0 10 10"><path d="M3 0.5 H7 L9.7 3.2 V6.8 L7 9.5 H3 L0.3 6.8 V3.2Z" fill="#1f6f86"/><path d="M3 0.3 H7 L9.5 2.8 V5.5 L6 9 H2.5 L0.3 6.8 V3Z" fill="#eafcff"/><path d="M7 0.3 L9.5 2.8 V5.5 L7.5 7.5 Q9 4 7 0.3Z" fill="#8ee8f8"/><circle cx="5" cy="4.2" r="1.6" fill="#5ccaf0"/></svg>
<svg style="left:960.5px;top:288.5px" width="10" height="10" viewBox="0 0 10 10"><path d="M3 0.5 H7 L9.7 3.2 V6.8 L7 9.5 H3 L0.3 6.8 V3.2Z" fill="#1f6f86"/><path d="M3 0.3 H7 L9.5 2.8 V5.5 L6 9 H2.5 L0.3 6.8 V3Z" fill="#eafcff"/><path d="M7 0.3 L9.5 2.8 V5.5 L7.5 7.5 Q9 4 7 0.3Z" fill="#8ee8f8"/><circle cx="5" cy="4.2" r="1.6" fill="#5ccaf0"/></svg>
<svg style="left:960.5px;top:305.5px" width="10" height="10" viewBox="0 0 10 10"><path d="M3 0.5 H7 L9.7 3.2 V6.8 L7 9.5 H3 L0.3 6.8 V3.2Z" fill="#1f6f86"/><path d="M3 0.3 H7 L9.5 2.8 V5.5 L6 9 H2.5 L0.3 6.8 V3Z" fill="#eafcff"/><path d="M7 0.3 L9.5 2.8 V5.5 L7.5 7.5 Q9 4 7 0.3Z" fill="#8ee8f8"/><circle cx="5" cy="4.2" r="1.6" fill="#5ccaf0"/></svg>
<svg style="left:960.5px;top:323px" width="10" height="10" viewBox="0 0 10 10"><path d="M3 0.5 H7 L9.7 3.2 V6.8 L7 9.5 H3 L0.3 6.8 V3.2Z" fill="#1f6f86"/><path d="M3 0.3 H7 L9.5 2.8 V5.5 L6 9 H2.5 L0.3 6.8 V3Z" fill="#eafcff"/><path d="M7 0.3 L9.5 2.8 V5.5 L7.5 7.5 Q9 4 7 0.3Z" fill="#8ee8f8"/><circle cx="5" cy="4.2" r="1.6" fill="#5ccaf0"/></svg>
<svg style="left:960.5px;top:341px" width="10" height="10" viewBox="0 0 10 10"><path d="M3 0.5 H7 L9.7 3.2 V6.8 L7 9.5 H3 L0.3 6.8 V3.2Z" fill="#1f6f86"/><path d="M3 0.3 H7 L9.5 2.8 V5.5 L6 9 H2.5 L0.3 6.8 V3Z" fill="#eafcff"/><path d="M7 0.3 L9.5 2.8 V5.5 L7.5 7.5 Q9 4 7 0.3Z" fill="#8ee8f8"/><circle cx="5" cy="4.2" r="1.6" fill="#5ccaf0"/></svg>
<svg style="left:900px;top:11px" width="18" height="5" viewBox="0 0 18 5"><rect x="0" y="0" width="18" height="1" fill="#5e5e5e"/><rect x="0" y="4" width="18" height="1" fill="#5e5e5e"/></svg>
<span class="t" style="left:956px;top:18.92px;font-size:12.5px;color:#e8e8e8;font-weight:bold;">y</span>
<svg style="left:989px;top:25px" width="9" height="11" viewBox="0 0 9 11"><path d="M2.2 5 V3.2 Q2.2 0.8 4.5 0.8 Q6.8 0.8 6.8 3.2" stroke="#d4d4d4" stroke-width="1.3" fill="none"/><rect x="0.5" y="5" width="8" height="6" fill="#d4d4d4"/></svg>
<svg style="left:926px;top:35px" width="61" height="60" viewBox="0 0 61 60">
<defs><linearGradient id="gg" x1="0" y1="0" x2="0" y2="1"><stop offset="0" stop-color="#9be86a"/><stop offset="1" stop-color="#7cc64a"/></linearGradient>
<linearGradient id="gr" x1="0" y1="0" x2="1" y2="0"><stop offset="0" stop-color="#d94e3a"/><stop offset="1" stop-color="#e86a55"/></linearGradient>
<linearGradient id="gy" x1="0" y1="0" x2="1" y2="0"><stop offset="0" stop-color="#c8c8c8"/><stop offset="1" stop-color="#a8a8a8"/></linearGradient>
<linearGradient id="gy2" x1="0" y1="0" x2="0" y2="1"><stop offset="0" stop-color="#a8a8a8"/><stop offset="1" stop-color="#d0d0d0"/></linearGradient></defs>
<path d="M23 0 H37 L30 20.5Z" fill="url(#gg)"/>
<path d="M0 22.5 L21.5 29.5 L0 37Z" fill="url(#gy)"/>
<path d="M60.2 22.5 L39.5 29.5 L60.2 37Z" fill="url(#gr)"/>
<path d="M30 39 L37 59.5 H23Z" fill="url(#gy2)"/>
<rect x="22.5" y="22.4" width="15" height="14.6" fill="#f0f0f0"/></svg>
<span class="t" style="left:994.5px;top:57.02px;font-size:12.5px;color:#e8e8e8;font-weight:bold;">x</span>
<svg style="left:930px;top:117px" width="11" height="8" viewBox="0 0 11 8"><rect x="0" y="0" width="11" height="1.2" fill="#9a9a9a"/><rect x="0" y="3.3" width="11" height="1.2" fill="#9a9a9a"/><rect x="0" y="6.6" width="11" height="1.2" fill="#9a9a9a"/></svg>
<span class="t" style="left:945.5px;top:113.82px;font-size:13.8px;color:#c0c0c0;">Back</span>
<div class="a" style="left:3px;top:2px;width:48px;height:225px;background:#171717;border-radius:4px"></div>
<svg style="left:16px;top:10px" width="19" height="5" viewBox="0 0 19 5"><rect x="0" y="0" width="19" height="1" fill="#6a6a6a"/><rect x="0" y="3.5" width="19" height="1" fill="#6a6a6a"/></svg>
<svg style="left:15px;top:29px" width="15" height="15" viewBox="0 0 15 15"><path d="M7.5 0.8 L14 4.2 L14 10.8 L7.5 14.2 L1 10.8 L1 4.2Z M1 4.2 L7.5 7.6 L14 4.2 M7.5 7.6 V14.2" stroke="#c4c4c4" stroke-width="1.2" fill="none" stroke-linejoin="round"/></svg>
<svg style="left:33px;top:34px" width="8" height="5" viewBox="0 0 8 5"><path d="M0 0H8L4 5Z" fill="#c4c4c4"/></svg>
<div class="a" style="left:6px;top:56px;width:42px;height:22.5px;background:#585858;border-radius:3px"></div>
<div class="a" style="left:6px;top:80px;width:42px;height:22.5px;background:#46607c;"></div>
<div class="a" style="left:6px;top:104px;width:42px;height:22.5px;background:#585858;"></div>
<div class="a" style="left:6px;top:128px;width:42px;height:22.5px;background:#585858;"></div>
<div class="a" style="left:6px;top:152px;width:42px;height:22.5px;background:#585858;"></div>
<div class="a" style="left:6px;top:176px;width:42px;height:22.5px;background:#585858;"></div>
<div class="a" style="left:6px;top:202px;width:42px;height:22.5px;background:#585858;border-radius:3px"></div>
<svg style="left:18px;top:58px" width="17" height="18" viewBox="0 0 17 18"><g stroke="#c4c4c4" stroke-linecap="round" fill="none"><path d="M4.2 9 V4" stroke-width="2.1"/><path d="M7 8 V1.8" stroke-width="2.1"/><path d="M9.8 8 V1.5" stroke-width="2.1"/><path d="M12.6 8.5 V3" stroke-width="2.1"/><path d="M2.2 10.5 L4.3 13" stroke-width="2.1"/></g><path d="M3.1 8 H13.7 V12 Q13.7 17 9 17 H7.5 Q4.5 17 3.2 13.5Z" fill="#c4c4c4"/><path d="M13.7 11 L15.3 8.8" stroke="#c4c4c4" stroke-width="2.1" stroke-linecap="round"/></svg>
<svg style="left:17px;top:82px" width="19" height="19" viewBox="0 0 19 19"><path d="M9.5 1 V7 M9.5 12 V18 M1 9.5 H7 M12 9.5 H18" stroke="#e8e8e8" stroke-width="1.3"/><path d="M6.8 3.7 L9.5 1 L12.2 3.7 M6.8 15.3 L9.5 18 L12.2 15.3 M3.7 6.8 L1 9.5 L3.7 12.2 M15.3 6.8 L18 9.5 L15.3 12.2" stroke="#e8e8e8" stroke-width="1.3" fill="none"/></svg>
<svg style="left:18px;top:106px" width="17" height="19" viewBox="0 0 17 19"><path d="M5.5 16 A7 7 0 0 1 7.5 2.3" stroke="#c4c4c4" stroke-width="1.2" fill="none"/><path d="M11.5 3 A7 7 0 0 1 9.5 16.7" stroke="#c4c4c4" stroke-width="1.2" fill="none"/><path d="M11 0.5 L11.7 3.2 L14.5 3.5" stroke="#c4c4c4" stroke-width="1.2" fill="none"/><path d="M6 18.5 L5.3 15.8 L2.5 15.5" stroke="#c4c4c4" stroke-width="1.2" fill="none"/></svg>
<svg style="left:19px;top:131px" width="15" height="16" viewBox="0 0 15 16"><rect x="0.6" y="0.6" width="13.8" height="13.8" stroke="#c4c4c4" stroke-width="1.2" fill="none"/><rect x="0.6" y="9" width="5.4" height="5.4" stroke="#c4c4c4" stroke-width="1.2" fill="none"/><path d="M6 8.5 L11 3.5 M7.5 3.5 H11 V7" stroke="#c4c4c4" stroke-width="1.2" fill="none"/></svg>
<svg style="left:19px;top:155px" width="15" height="16" viewBox="0 0 15 16"><rect x="2.3" y="2.3" width="10.4" height="10.4" stroke="#c4c4c4" stroke-width="1" fill="none" stroke-dasharray="4.5 1.5" stroke-dashoffset="-1.5"/><rect x="0.6" y="0.6" width="3" height="3" fill="#c4c4c4"/><rect x="11.4" y="0.6" width="3" height="3" fill="#c4c4c4"/><rect x="0.6" y="11.4" width="3" height="3" fill="#c4c4c4"/><rect x="11.4" y="11.4" width="3" height="3" fill="#c4c4c4"/></svg>
<svg style="left:18px;top:179px" width="17" height="17" viewBox="0 0 17 17"><circle cx="8.5" cy="8.5" r="6" stroke="#c4c4c4" stroke-width="1.2" fill="none" stroke-dasharray="7 2.5"/><path d="M8.5 3.5 V13.5 M3.5 8.5 H13.5 M7 5 L8.5 3.5 L10 5 M7 12 L8.5 13.5 L10 12 M5 7 L3.5 8.5 L5 10 M12 7 L13.5 8.5 L12 10" stroke="#c4c4c4" stroke-width="1.1" fill="none"/><path d="M14 0.5 L16.5 0.5 L16.5 3Z M0.5 14 L0.5 16.5 L3 16.5Z" fill="#c4c4c4"/></svg>
<svg style="left:19px;top:206px" width="15" height="16" viewBox="0 0 15 16"><circle cx="3.5" cy="3.5" r="2.7" stroke="#5ad08a" stroke-width="1.3" fill="none"/><path d="M11 2 V8 M8 5 H14" stroke="#c4c4c4" stroke-width="1.3"/><path d="M7.5 8 L13 12 L10 12.5 L11.5 15.5 L10 16 L8.5 13 L7 15Z" fill="#c4c4c4"/></svg>
<div class="a" style="left:3px;top:655px;width:395px;height:30px;background:#171717;border-radius:4px"></div>
<div class="a" style="left:8px;top:660px;width:1px;height:20px;background:#5a5a5a;"></div>
<div class="a" style="left:12px;top:660px;width:1px;height:20px;background:#5a5a5a;"></div>
<div class="a" style="left:20.5px;top:659px;width:36px;height:22.5px;background:#585858;border-radius:3px 0 0 3px"></div>
<div class="a" style="left:58px;top:659px;width:36px;height:22.5px;background:#46607c;"></div>
<div class="a" style="left:95.69999999999999px;top:659px;width:36px;height:22.5px;background:#585858;"></div>
<div class="a" style="left:133.3px;top:659px;width:36px;height:22.5px;background:#46607c;"></div>
<div class="a" style="left:171px;top:659px;width:36px;height:22.5px;background:#46607c;"></div>
<div class="a" style="left:208.39999999999998px;top:659px;width:36px;height:22.5px;background:#46607c;"></div>
<div class="a" style="left:246px;top:659px;width:36px;height:22.5px;background:#46607c;"></div>
<div class="a" style="left:283.70000000000005px;top:659px;width:36px;height:22.5px;background:#585858;"></div>
<div class="a" style="left:321.4px;top:659px;width:36px;height:22.5px;background:#46607c;"></div>
<div class="a" style="left:359px;top:659px;width:36px;height:22.5px;background:#585858;border-radius:0 3px 3px 0"></div>
<svg style="left:30px;top:662px" width="18" height="16" viewBox="0 0 18 16"><path d="M0.5 3.5 H4 Q6.5 3.5 8.5 8 Q10.5 12.5 13 12.5 H15 M0.5 12.5 H4 Q6.5 12.5 8.5 8 Q10.5 3.5 13 3.5 H15" stroke="#b59cf0" stroke-width="1.6" fill="none"/><path d="M14 0.5 L17.5 3.5 L14 6.5Z M14 9.5 L17.5 12.5 L14 15.5Z" fill="#b59cf0"/></svg>
<svg style="left:67px;top:661px" width="18" height="18" viewBox="0 0 18 18"><path d="M9 1 V17 M1 9 H17" stroke="#d8d8d8" stroke-width="1.2"/><path d="M6.5 3.5 L9 1 L11.5 3.5 M6.5 14.5 L9 17 L11.5 14.5 M3.5 6.5 L1 9 L3.5 11.5 M14.5 6.5 L17 9 L14.5 11.5" stroke="#d8d8d8" stroke-width="1.2" fill="none"/></svg>
<svg style="left:105px;top:662px" width="17" height="16" viewBox="0 0 17 16"><path d="M0.6 3 V0.6 H16.4 V3 M0.6 13 V15.4 H16.4 V13" stroke="#d8d8d8" stroke-width="1.2" fill="none"/><path d="M4 4 L13 12 M4 12 L11 5" stroke="#d8d8d8" stroke-width="1.3"/><path d="M9 4 H12 V7" stroke="#d8d8d8" stroke-width="1.2" fill="none"/></svg>
<svg style="left:142px;top:662px" width="18" height="17" viewBox="0 0 18 17"><rect x="3.5" y="0.6" width="11" height="4" rx="1" stroke="#d8d8d8" stroke-width="1.1" fill="none"/><rect x="3.5" y="0.6" width="5" height="4" fill="#d8d8d8"/><path d="M1 8.5 H17 M1 13.5 H17" stroke="#d8d8d8" stroke-width="1.1"/><rect x="10" y="6.5" width="2" height="4" fill="#d8d8d8"/><rect x="5" y="11.5" width="2" height="4" fill="#d8d8d8"/></svg>
<svg style="left:179px;top:662px" width="19" height="17" viewBox="0 0 19 17"><path d="M3 0.5V13M6.5 0.5V13M0.5 3H9M0.5 6.5H9M0.5 10H7 M0.5 13.5 L17 1" stroke="#d8d8d8" stroke-width="1.1" fill="none"/><path d="M10 9 V16.5 M13 7 V16.5 M16 5 V16.5 M9 12 H17" stroke="#d8d8d8" stroke-width="1.1"/></svg>
<svg style="left:217px;top:662px" width="18" height="17" viewBox="0 0 18 17"><circle cx="9" cy="8.5" r="7" stroke="#d8d8d8" stroke-width="1.5" fill="none"/><path d="M4.5 14.5 Q13 16 15.5 8 Q15 4 12 2 Q14 10 4.5 14.5Z" fill="#d8d8d8"/></svg>
<svg style="left:255px;top:662px" width="18" height="17" viewBox="0 0 18 17"><circle cx="7" cy="2.5" r="2.2" fill="#d8d8d8"/><path d="M9 6.5 L17 11 L9 15.5 L1 11Z M5 8.7 L13 13.3 M13 8.7 L5 13.3" stroke="#d8d8d8" stroke-width="1.2" fill="none"/></svg>
<svg style="left:293px;top:662px" width="17" height="17" viewBox="0 0 17 17"><circle cx="6.5" cy="6.5" r="5" stroke="#d8d8d8" stroke-width="1.3" fill="none"/><path d="M10.2 10.2 L15.5 15.5" stroke="#d8d8d8" stroke-width="1.7"/></svg>
<svg style="left:330px;top:661px" width="18" height="18" viewBox="0 0 18 18"><rect x="6.5" y="6.5" width="5" height="5" stroke="#d8d8d8" stroke-width="1.1" fill="none"/><path d="M9 0.5 L11.5 4 H6.5Z M9 17.5 L11.5 14 H6.5Z M0.5 9 L4 6.5 V11.5Z M17.5 9 L14 6.5 V11.5Z" fill="#d8d8d8"/><path d="M9 4V6.5M9 11.5V14M4 9H6.5M11.5 9H14" stroke="#d8d8d8" stroke-width="1"/></svg>
<svg style="left:368px;top:661px" width="19" height="18" viewBox="0 0 19 18"><rect x="0.5" y="0.5" width="11" height="9" rx="1.2" fill="#d8d8d8"/><path d="M12.5 3.5 L17 1 V9 L12.5 6.5Z" fill="#d8d8d8"/><path d="M3.5 13.5 Q9 8.5 14.5 13.5 Q9 18.5 3.5 13.5Z" fill="#d8d8d8" stroke="#585858" stroke-width="0.8"/><circle cx="9" cy="13.5" r="1.8" fill="#585858"/></svg>
</div>
<div class="a" style="left:0px;top:808px;width:1334px;height:30px;background:#161616;"></div>
<div class="a" style="left:91px;top:811px;width:99px;height:27px;background:#3c3c3c;border-radius:4px 4px 0 0"></div>
<svg style="left:9.5px;top:819.5px" width="14" height="12" viewBox="0 0 14 12"><path d="M0.5 0.5 H5 L6.5 2.5 H13.5 V11.5 H0.5Z" fill="#c4c4c4"/></svg>
<span class="t" style="left:28.4px;top:818.15px;font-size:14px;color:#c4c4c4;">Project</span>
<svg style="left:103px;top:819px" width="12.5" height="12.5" viewBox="0 0 12.5 12.5"><rect x="0" y="0" width="12.5" height="12.5" rx="1" fill="#c4c4c4"/><path d="M2.2 2.8H7.5M2.2 5.1H10.3M2.2 7.4H10.3M2.2 9.7H10.3" stroke="#3c3c3c" stroke-width="1.1"/></svg>
<span class="t" style="left:120.3px;top:818.15px;font-size:14px;color:#c4c4c4;">Console</span>
<svg style="left:201px;top:818.5px" width="14" height="14" viewBox="0 0 14 14"><circle cx="7" cy="7" r="6.8" fill="#c4c4c4"/><path d="M6.3 2.5 V7.6 H10.5" stroke="#161616" stroke-width="1.6" fill="none"/></svg>
<span class="t" style="left:220.2px;top:818.06px;font-size:14.1px;color:#c4c4c4;">Animation</span>
<svg style="left:314px;top:819px" width="13" height="12" viewBox="0 0 13 12"><path d="M0.5 1 Q4 1 6 6 Q4 11 0.5 11" stroke="#c4c4c4" stroke-width="1.5" fill="none"/><path d="M2 6 H11.5" stroke="#c4c4c4" stroke-width="1.5"/><path d="M9 3 L12.5 6 L9 9Z" fill="#c4c4c4"/></svg>
<span class="t" style="left:331px;top:817.98px;font-size:14.2px;color:#c4c4c4;">Animator</span>
<svg style="left:1316.5px;top:818px" width="4" height="12" viewBox="0 0 4 12"><circle cx="2" cy="1.7" r="1.4" fill="#c4c4c4"/><circle cx="2" cy="6" r="1.4" fill="#c4c4c4"/><circle cx="2" cy="10.3" r="1.4" fill="#c4c4c4"/></svg>
<div class="a" style="left:0px;top:838px;width:1334px;height:22px;background:#3c3c3c;"></div>
<div class="a" style="left:0px;top:859px;width:1334px;height:1px;background:#2a2a2a;"></div>
<div class="a" style="left:63px;top:838px;width:2px;height:21px;background:#303030;"></div>
<div class="a" style="left:65px;top:838px;width:64px;height:21px;background:#474747;"></div>
<div class="a" style="left:129px;top:838px;width:2px;height:21px;background:#303030;"></div>
<div class="a" style="left:214px;top:838px;width:2px;height:21px;background:#303030;"></div>
<div class="a" style="left:273px;top:838px;width:2px;height:21px;background:#303030;"></div>
<div class="a" style="left:43.5px;top:841px;width:1px;height:15px;background:#303030;"></div>
<span class="t" style="left:4.8px;top:842.62px;font-size:13.8px;color:#c4c4c4;">Clear</span>
<svg style="left:50px;top:847px" width="8" height="5" viewBox="0 0 8 5"><path d="M0 0H8L4.0 5Z" fill="#c4c4c4"/></svg>
<span class="t" style="left:69.3px;top:842.45px;font-size:14px;color:#c4c4c4;">Collapse</span>
<span class="t" style="left:136.4px;top:842.53px;font-size:13.9px;color:#c4c4c4;">Error Pause</span>
<span class="t" style="left:220.2px;top:842.45px;font-size:14px;color:#c4c4c4;">Editor</span>
<svg style="left:261px;top:847px" width="8" height="5" viewBox="0 0 8 5"><path d="M0 0H8L4.0 5Z" fill="#c4c4c4"/></svg>
<div class="a" style="left:877px;top:840.5px;width:337px;height:17px;background:#2a2a2a;border-radius:4px;border-top:1px solid #111"></div>
<svg style="left:881.5px;top:844.5px" width="9" height="9" viewBox="0 0 9 9"><circle cx="3.5" cy="3.5" r="2.6" stroke="#c4c4c4" stroke-width="1.2" fill="none"/><path d="M5.5 5.5 L8 8" stroke="#c4c4c4" stroke-width="1.5"/></svg>
<div class="a" style="left:1214px;top:838px;width:4px;height:21px;background:#303030;"></div>
<div class="a" style="left:1218px;top:838px;width:37px;height:21px;background:#3c3c3c;"></div>
<div class="a" style="left:1255px;top:838px;width:2px;height:21px;background:#303030;"></div>
<div class="a" style="left:1257px;top:838px;width:36px;height:21px;background:#4a4a4a;"></div>
<div class="a" style="left:1293px;top:838px;width:2px;height:21px;background:#303030;"></div>
<div class="a" style="left:1295px;top:838px;width:36px;height:21px;background:#4a4a4a;"></div>
<svg style="left:1224.5px;top:840.5px" width="15" height="16" viewBox="0 0 15 16"><path d="M7.3 0.7 Q14 0.7 14 7.3 Q14 11 11.5 12.8 L13 15.5 L8.5 13.8 Q8 13.9 7.3 13.9 Q0.7 13.9 0.7 7.3 Q0.7 0.7 7.3 0.7Z" fill="#ececec"/><rect x="6.3" y="3" width="2" height="6" fill="#3c3c3c"/><rect x="6.3" y="10" width="2" height="2" fill="#3c3c3c"/></svg>
<span class="t" style="left:1243px;top:842.75px;font-size:13px;color:#c0c0c0;">3</span>
<svg style="left:1263px;top:840.5px" width="15" height="16" viewBox="0 0 15 16"><path d="M7.5 0.5 Q8.2 0.5 8.6 1.2 L14.6 14 Q15 15.5 13.5 15.5 H1.5 Q0 15.5 0.4 14 L6.4 1.2 Q6.8 0.5 7.5 0.5Z" fill="#ffc107"/><rect x="6.6" y="4.5" width="1.8" height="6" fill="#4a4a4a"/><rect x="6.6" y="11.8" width="1.8" height="1.8" fill="#4a4a4a"/></svg>
<span class="t" style="left:1281px;top:842.75px;font-size:13px;color:#a8a8a8;">6</span>
<svg style="left:1301px;top:840.8px" width="15" height="15" viewBox="0 0 15 15"><path d="M4.5 0.3 H10.5 L14.7 4.5 V10.5 L10.5 14.7 H4.5 L0.3 10.5 V4.5Z" fill="#d8d8d8"/><rect x="6.6" y="3" width="1.8" height="6.5" fill="#4a4a4a"/><rect x="6.6" y="10.8" width="1.8" height="1.8" fill="#4a4a4a"/></svg>
<span class="t" style="left:1319.6px;top:842.75px;font-size:13px;color:#a8a8a8;">0</span>
<div class="a" style="left:0;top:860px;width:1321px;height:166px;overflow:hidden">
<div class="a" style="left:0px;top:-6.4px;width:1321px;height:43.13px;background:#3b3b3b;"></div>
<svg style="left:11px;top:0.6px" width="30" height="29" viewBox="0 0 30 29"><path d="M15 0.5 Q16.3 0.5 17 1.8 L29.3 25.5 Q30 28.5 27 28.5 H3 Q0 28.5 0.7 25.5 L13 1.8 Q13.7 0.5 15 0.5Z" fill="#ffc107"/><rect x="13.3" y="8" width="3.4" height="11" rx="1.5" fill="#383838"/><circle cx="15" cy="22.5" r="1.9" fill="#383838"/></svg>
<div class="a" style="left:45.9px;top:-6.40px;width:1275px;height:43px;overflow:hidden"><span class="t" style="left:-0.3px;top:5.98px;font-size:14.2px;color:#c4c4c4;letter-spacing:-0.337px">[21:17:21] </span>
<span class="t" style="left:63.1px;top:5.98px;font-size:14.2px;color:#c4c4c4;letter-spacing:0.036px">Shader warning in 'Shader </span>
<span class="t" style="left:234.9px;top:5.98px;font-size:14.2px;color:#c4c4c4;letter-spacing:-0.021px">Graphs/WaterVolume-URP': </span>
<span class="t" style="left:414.9px;top:5.98px;font-size:14.2px;color:#c4c4c4;letter-spacing:0.176px">pow(f, e) will not work for </span>
<span class="t" style="left:580.8px;top:5.98px;font-size:14.2px;color:#c4c4c4;letter-spacing:0.088px">negative f, use abs(f) or </span>
<span class="t" style="left:736.2px;top:5.98px;font-size:14.2px;color:#c4c4c4;letter-spacing:0.129px">conditionally </span>
<span class="t" style="left:820.1px;top:5.98px;font-size:14.2px;color:#c4c4c4;letter-spacing:0.135px">handle negative values if you expect them at </span>
<span class="t" style="left:1110.35px;top:5.98px;font-size:14.2px;color:#c4c4c4;letter-spacing:0.000px">Assets/Bitgem/StylisedWater/URP/Shaders/WaterVolume-URP.shadergraph</span>
</div>
<svg style="left:1294px;top:6.75px" width="19" height="19" viewBox="0 0 19 19"><circle cx="9.5" cy="9.5" r="9.5" fill="#5a5a5a"/></svg>
<span class="t" style="left:1299.5px;top:9.82px;font-size:13.5px;color:#c8c8c8;">1</span>
<div class="a" style="left:0px;top:36.73px;width:1321px;height:43.13px;background:#3f3f3f;"></div>
<svg style="left:11px;top:43.2px" width="30" height="29" viewBox="0 0 30 29"><path d="M15 0.5 Q16.3 0.5 17 1.8 L29.3 25.5 Q30 28.5 27 28.5 H3 Q0 28.5 0.7 25.5 L13 1.8 Q13.7 0.5 15 0.5Z" fill="#ffc107"/><rect x="13.3" y="8" width="3.4" height="11" rx="1.5" fill="#383838"/><circle cx="15" cy="22.5" r="1.9" fill="#383838"/></svg>
<div class="a" style="left:45.9px;top:36.73px;width:1275px;height:43px;overflow:hidden"><span class="t" style="left:-0.3px;top:5.65px;font-size:14.2px;color:#c4c4c4;letter-spacing:-0.337px">[21:17:21] </span>
<span class="t" style="left:63.1px;top:5.65px;font-size:14.2px;color:#c4c4c4;letter-spacing:0.036px">Shader warning in 'Shader </span>
<span class="t" style="left:234.9px;top:5.65px;font-size:14.2px;color:#c4c4c4;letter-spacing:-0.021px">Graphs/WaterVolume-URP': </span>
<span class="t" style="left:414.9px;top:5.65px;font-size:14.2px;color:#c4c4c4;letter-spacing:0.176px">pow(f, e) will not work for </span>
<span class="t" style="left:580.8px;top:5.65px;font-size:14.2px;color:#c4c4c4;letter-spacing:0.088px">negative f, use abs(f) or </span>
<span class="t" style="left:736.2px;top:5.65px;font-size:14.2px;color:#c4c4c4;letter-spacing:0.129px">conditionally </span>
<span class="t" style="left:820.1px;top:5.65px;font-size:14.2px;color:#c4c4c4;letter-spacing:0.135px">handle negative values if you expect them at </span>
<span class="t" style="left:1110.35px;top:5.65px;font-size:14.2px;color:#c4c4c4;letter-spacing:0.000px">Assets/Bitgem/StylisedWater/URP/Shaders/WaterVolume-URP.shadergraph</span>
</div>
<svg style="left:1294px;top:49.65px" width="19" height="19" viewBox="0 0 19 19"><circle cx="9.5" cy="9.5" r="9.5" fill="#5a5a5a"/></svg>
<span class="t" style="left:1299.5px;top:52.72px;font-size:13.5px;color:#c8c8c8;">1</span>
<div class="a" style="left:0px;top:79.86px;width:1321px;height:43.13px;background:#3b3b3b;"></div>
<svg style="left:11px;top:85.8px" width="30" height="29" viewBox="0 0 30 29"><path d="M15 0.5 Q16.3 0.5 17 1.8 L29.3 25.5 Q30 28.5 27 28.5 H3 Q0 28.5 0.7 25.5 L13 1.8 Q13.7 0.5 15 0.5Z" fill="#ffc107"/><rect x="13.3" y="8" width="3.4" height="11" rx="1.5" fill="#383838"/><circle cx="15" cy="22.5" r="1.9" fill="#383838"/></svg>
<div class="a" style="left:45.9px;top:79.86px;width:1275px;height:43px;overflow:hidden"><span class="t" style="left:-0.3px;top:5.32px;font-size:14.2px;color:#c4c4c4;letter-spacing:-0.337px">[21:17:21] </span>
<span class="t" style="left:63.1px;top:5.32px;font-size:14.2px;color:#c4c4c4;letter-spacing:0.036px">Shader warning in 'Shader </span>
<span class="t" style="left:234.9px;top:5.32px;font-size:14.2px;color:#c4c4c4;letter-spacing:-0.021px">Graphs/WaterVolume-URP': </span>
<span class="t" style="left:414.9px;top:5.32px;font-size:14.2px;color:#c4c4c4;letter-spacing:0.176px">pow(f, e) will not work for </span>
<span class="t" style="left:580.8px;top:5.32px;font-size:14.2px;color:#c4c4c4;letter-spacing:0.088px">negative f, use abs(f) or </span>
<span class="t" style="left:736.2px;top:5.32px;font-size:14.2px;color:#c4c4c4;letter-spacing:0.129px">conditionally </span>
<span class="t" style="left:820.1px;top:5.32px;font-size:14.2px;color:#c4c4c4;letter-spacing:0.135px">handle negative values if you expect them at </span>
<span class="t" style="left:1110.35px;top:5.32px;font-size:14.2px;color:#c4c4c4;letter-spacing:0.000px">Assets/Bitgem/StylisedWater/URP/Shaders/WaterVolume-URP.shadergraph</span>
</div>
<svg style="left:1294px;top:92.55px" width="19" height="19" viewBox="0 0 19 19"><circle cx="9.5" cy="9.5" r="9.5" fill="#5a5a5a"/></svg>
<span class="t" style="left:1299.5px;top:95.62px;font-size:13.5px;color:#c8c8c8;">1</span>
<div class="a" style="left:0px;top:122.99px;width:1321px;height:43.13px;background:#3f3f3f;"></div>
<svg style="left:11px;top:128.4px" width="30" height="29" viewBox="0 0 30 29"><path d="M15 0.5 Q16.3 0.5 17 1.8 L29.3 25.5 Q30 28.5 27 28.5 H3 Q0 28.5 0.7 25.5 L13 1.8 Q13.7 0.5 15 0.5Z" fill="#ffc107"/><rect x="13.3" y="8" width="3.4" height="11" rx="1.5" fill="#383838"/><circle cx="15" cy="22.5" r="1.9" fill="#383838"/></svg>
<div class="a" style="left:45.9px;top:122.99px;width:1275px;height:43px;overflow:hidden"><span class="t" style="left:-0.3px;top:4.99px;font-size:14.2px;color:#c4c4c4;letter-spacing:-0.337px">[21:17:21] </span>
<span class="t" style="left:63.1px;top:4.99px;font-size:14.2px;color:#c4c4c4;letter-spacing:0.036px">Shader warning in 'Shader </span>
<span class="t" style="left:234.9px;top:4.99px;font-size:14.2px;color:#c4c4c4;letter-spacing:-0.021px">Graphs/WaterVolume-URP': </span>
<span class="t" style="left:414.9px;top:4.99px;font-size:14.2px;color:#c4c4c4;letter-spacing:0.176px">pow(f, e) will not work for </span>
<span class="t" style="left:580.8px;top:4.99px;font-size:14.2px;color:#c4c4c4;letter-spacing:0.088px">negative f, use abs(f) or </span>
<span class="t" style="left:736.2px;top:4.99px;font-size:14.2px;color:#c4c4c4;letter-spacing:0.129px">conditionally </span>
<span class="t" style="left:820.1px;top:4.99px;font-size:14.2px;color:#c4c4c4;letter-spacing:0.135px">handle negative values if you expect them at </span>
<span class="t" style="left:1110.35px;top:4.99px;font-size:14.2px;color:#c4c4c4;letter-spacing:0.000px">Assets/Bitgem/StylisedWater/URP/Shaders/WaterVolume-URP.shadergraph</span>
</div>
<svg style="left:1294px;top:135.45px" width="19" height="19" viewBox="0 0 19 19"><circle cx="9.5" cy="9.5" r="9.5" fill="#5a5a5a"/></svg>
<span class="t" style="left:1299.5px;top:138.52px;font-size:13.5px;color:#c8c8c8;">1</span>
</div>
<div class="a" style="left:0px;top:1026px;width:1321px;height:1px;background:#2e2e2e;"></div>
<div class="a" style="left:1319px;top:860px;width:15px;height:165px;background:#393939;"></div>
<svg style="left:1323px;top:867.5px" width="8" height="5" viewBox="0 0 8 5"><path d="M0 5H8L4 0Z" fill="#c4c4c4"/></svg>
<div class="a" style="left:1321px;top:918.5px;width:10px;height:88px;background:#5f5f5f;border-radius:5px"></div>
<svg style="left:1323px;top:1014.5px" width="8" height="5" viewBox="0 0 8 5"><path d="M0 0H8L4 5Z" fill="#c4c4c4"/></svg>
<div class="a" style="left:313px;top:90px;width:2px;height:718px;background:#191919;"></div>
<div class="a" style="left:1333px;top:90px;width:3px;height:990px;background:#171717;"></div>
<div class="a" style="left:1336px;top:90px;width:1px;height:990px;background:#3c3c3c;"></div>
<div class="a" style="left:315px;top:807px;width:1019px;height:1px;background:#2f2f2f;"></div>
</body></html>
